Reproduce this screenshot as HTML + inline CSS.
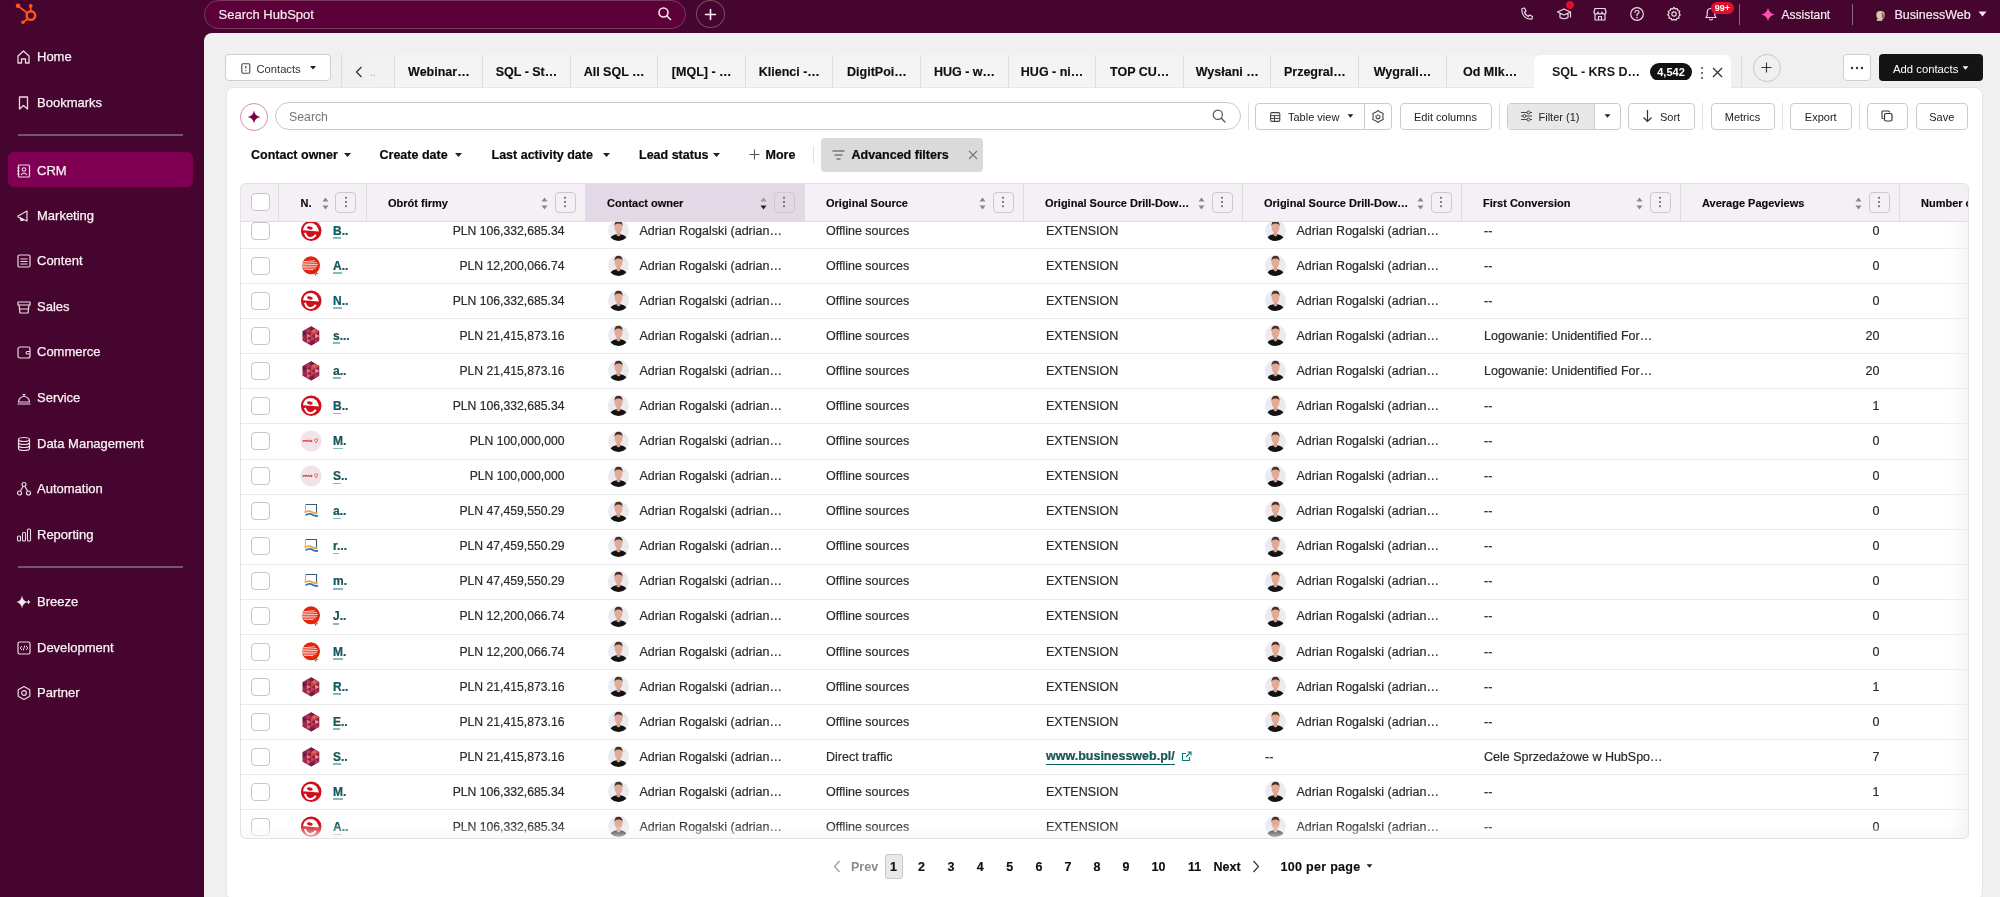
<!DOCTYPE html>
<html><head><meta charset="utf-8"><title>HubSpot CRM</title>
<style>
*{box-sizing:border-box;margin:0;padding:0}
html,body{width:2000px;height:897px;overflow:hidden}
body{background:#46052e;font-family:"Liberation Sans", sans-serif;position:relative;color:#33475b}
.a{position:absolute}
.nav{position:absolute;left:0;height:20px;width:200px;color:#faf3f6;font-size:13px;line-height:22px;-webkit-text-stroke:0.25px #faf3f6}
.nav span{position:absolute;left:37px;top:0;white-space:nowrap}
.nav svg{position:absolute;left:16px;top:3px}
.sep{position:absolute;left:18px;width:165px;height:2px;background:#725a66}
.tb{position:absolute;top:0;height:28px}
.btn{position:absolute;top:103px;height:27px;border:1px solid #cbcbcb;border-radius:4px;background:#fff;font-size:11px;color:#222;line-height:26px;text-align:center;white-space:nowrap}
.tab{position:absolute;top:55px;height:34px;width:88px;border-left:1px solid #dedede;font-weight:bold;font-size:12.5px;color:#0f0f0f;line-height:35px;text-align:center;white-space:nowrap;background:#f4f4f4;-webkit-text-stroke:0.15px #0f0f0f}
.flt{position:absolute;top:147px;font-weight:bold;font-size:12.5px;color:#0a0a0a;line-height:16px;white-space:nowrap;-webkit-text-stroke:0.2px #0a0a0a}
.th{position:absolute;top:0.5px;height:39px;font-weight:bold;font-size:11px;color:#0a0a0a;line-height:39px;white-space:nowrap;-webkit-text-stroke:0.15px #0a0a0a}
.cell{position:absolute;font-size:12.5px;color:#2b2b2b;line-height:16px;white-space:nowrap;-webkit-text-stroke:0.2px #2b2b2b}
</style></head><body><div id="root" style="position:absolute;left:0;top:0;width:2000px;height:897px;overflow:hidden;will-change:transform">

<svg class="a" style="left:0px;top:0px" width="40" height="30" viewBox="0 0 40 30">
<g stroke="#ff5716" fill="none" stroke-linecap="round">
<circle cx="30.9" cy="15.6" r="4.3" stroke-width="2.4"/>
<line x1="30.8" y1="11" x2="30.7" y2="6.5" stroke-width="1.6"/>
<line x1="27.3" y1="13" x2="18" y2="5.8" stroke-width="1.6"/>
<line x1="27.6" y1="19" x2="23" y2="22.3" stroke-width="1.7"/>
</g>
<circle cx="18" cy="5.7" r="2.3" fill="#ff5716"/>
<circle cx="30.7" cy="5.9" r="1.9" fill="#ff5716"/>
<circle cx="23" cy="22.3" r="1.8" fill="#ff5716"/>
</svg>
<div class="a" style="left:8px;top:152px;width:185px;height:35px;border-radius:6px;background:#7f0052"></div>
<div class="nav" style="top:46.0px"><svg width="16" height="16" viewBox="0 0 16 16"><path d="M2 7 L7.5 2 L13 7 V14 H9.5 V10 H5.5 V14 H2 Z" fill="none" stroke="#e9dce3" stroke-width="1.3" stroke-linejoin="round"/></svg><span>Home</span></div>
<div class="nav" style="top:92.0px"><svg width="16" height="16" viewBox="0 0 16 16"><path d="M3.5 2 H11.5 V14 L7.5 10.5 L3.5 14 Z" fill="none" stroke="#e9dce3" stroke-width="1.3" stroke-linejoin="round"/></svg><span>Bookmarks</span></div>
<div class="nav" style="top:159.5px"><svg width="16" height="16" viewBox="0 0 16 16"><rect x="2.5" y="2" width="11" height="12" rx="1" fill="none" stroke="#e9dce3" stroke-width="1.2"/><circle cx="8" cy="6.5" r="1.8" fill="none" stroke="#e9dce3" stroke-width="1.1"/><path d="M5 12 Q8 8 11 12" fill="none" stroke="#e9dce3" stroke-width="1.1"/><line x1="1" y1="5" x2="3.5" y2="5" stroke="#e9dce3" stroke-width="1"/><line x1="1" y1="8" x2="3.5" y2="8" stroke="#e9dce3" stroke-width="1"/><line x1="1" y1="11" x2="3.5" y2="11" stroke="#e9dce3" stroke-width="1"/></svg><span>CRM</span></div>
<div class="nav" style="top:204.5px"><svg width="16" height="16" viewBox="0 0 16 16"><path d="M2 8 L11 3 V13 L2 9 Z M4 9 L5 12.5 H7 L6.5 10" fill="none" stroke="#e9dce3" stroke-width="1.2" stroke-linejoin="round"/></svg><span>Marketing</span></div>
<div class="nav" style="top:250.0px"><svg width="16" height="16" viewBox="0 0 16 16"><rect x="2" y="2" width="12" height="12" rx="1.5" fill="none" stroke="#e9dce3" stroke-width="1.2"/><path d="M4.5 6 H11.5 M4.5 8.5 H11.5 M4.5 11 H11.5" stroke="#e9dce3" stroke-width="1.1"/></svg><span>Content</span></div>
<div class="nav" style="top:295.5px"><svg width="16" height="16" viewBox="0 0 16 16"><path d="M2 3 H14 V6 H2 Z M3 6 L4 14 H12 L13 6 M3.5 10 H12.5" fill="none" stroke="#e9dce3" stroke-width="1.2" stroke-linejoin="round"/></svg><span>Sales</span></div>
<div class="nav" style="top:341.0px"><svg width="16" height="16" viewBox="0 0 16 16"><rect x="2" y="3" width="12" height="11" rx="2" fill="none" stroke="#e9dce3" stroke-width="1.2"/><path d="M14 7.5 H11 A1.3 1.3 0 0 0 11 10 H14" fill="none" stroke="#e9dce3" stroke-width="1.1"/></svg><span>Commerce</span></div>
<div class="nav" style="top:387.0px"><svg width="16" height="16" viewBox="0 0 16 16"><path d="M2.5 12 A5.5 5.5 0 0 1 13.5 12 Z M1.5 14 H14.5 M8 4.5 V6.5 M6.5 4.5 H9.5" fill="none" stroke="#e9dce3" stroke-width="1.2" stroke-linejoin="round"/></svg><span>Service</span></div>
<div class="nav" style="top:432.5px"><svg width="16" height="16" viewBox="0 0 16 16"><ellipse cx="8" cy="3.5" rx="5.5" ry="2" fill="none" stroke="#e9dce3" stroke-width="1.2"/><path d="M2.5 3.5 V12.5 A5.5 2 0 0 0 13.5 12.5 V3.5 M2.5 6.5 A5.5 2 0 0 0 13.5 6.5 M2.5 9.5 A5.5 2 0 0 0 13.5 9.5" fill="none" stroke="#e9dce3" stroke-width="1.2"/></svg><span>Data Management</span></div>
<div class="nav" style="top:478.0px"><svg width="16" height="16" viewBox="0 0 16 16"><circle cx="8" cy="3.5" r="2" fill="none" stroke="#e9dce3" stroke-width="1.2"/><circle cx="3.5" cy="12" r="2" fill="none" stroke="#e9dce3" stroke-width="1.2"/><circle cx="12.5" cy="12" r="2" fill="none" stroke="#e9dce3" stroke-width="1.2"/><path d="M7 5.5 L4.5 10 M9 5.5 L11.5 10" stroke="#e9dce3" stroke-width="1.2"/></svg><span>Automation</span></div>
<div class="nav" style="top:523.5px"><svg width="16" height="16" viewBox="0 0 16 16"><rect x="1.5" y="9" width="3" height="5" rx="1" fill="none" stroke="#e9dce3" stroke-width="1.1"/><rect x="6.5" y="5.5" width="3" height="8.5" rx="1" fill="none" stroke="#e9dce3" stroke-width="1.1"/><rect x="11.5" y="2" width="3" height="12" rx="1" fill="none" stroke="#e9dce3" stroke-width="1.1"/></svg><span>Reporting</span></div>
<div class="nav" style="top:591.0px"><svg width="16" height="16" viewBox="0 0 16 16"><path d="M6 1.5 Q6.8 7 11.5 8 Q6.8 9 6 14.5 Q5.2 9 0.5 8 Q5.2 7 6 1.5 Z M12.5 5.5 Q12.8 7.6 14.8 8 Q12.8 8.4 12.5 10.5 Q12.2 8.4 10.2 8 Q12.2 7.6 12.5 5.5Z" fill="#f3e9ee"/></svg><span>Breeze</span></div>
<div class="nav" style="top:636.5px"><svg width="16" height="16" viewBox="0 0 16 16"><rect x="2" y="2" width="12" height="12" rx="1.5" fill="none" stroke="#e9dce3" stroke-width="1.2"/><path d="M6 6 L4.2 8 L6 10 M10 6 L11.8 8 L10 10 M8.8 5.5 L7.2 10.5" fill="none" stroke="#e9dce3" stroke-width="1"/></svg><span>Development</span></div>
<div class="nav" style="top:682.0px"><svg width="16" height="16" viewBox="0 0 16 16"><path d="M8 1.5 L13.8 4.8 V11.2 L8 14.5 L2.2 11.2 V4.8 Z" fill="none" stroke="#e9dce3" stroke-width="1.2" stroke-linejoin="round"/><circle cx="8" cy="8" r="2.3" fill="none" stroke="#e9dce3" stroke-width="1.2"/></svg><span>Partner</span></div>
<div class="sep" style="top:134px"></div>
<div class="sep" style="top:566px"></div>
<div class="a" style="left:204px;top:0px;width:482px;height:28.5px;border-radius:14.5px;background:#5d0039;border:1px solid #7a3a60"></div>
<div class="a" style="left:218.5px;top:7px;font-size:13px;line-height:16px;color:#f5eaf0;white-space:nowrap;-webkit-text-stroke:0.2px #f5eaf0">Search HubSpot</div>
<svg class="a" style="left:657px;top:6px" width="16" height="16" viewBox="0 0 16 16"><circle cx="6.5" cy="6.5" r="4.5" fill="none" stroke="#f3e7ed" stroke-width="1.6"/><line x1="9.8" y1="9.8" x2="13.5" y2="13.5" stroke="#f3e7ed" stroke-width="1.6" stroke-linecap="round"/></svg>
<div class="a" style="left:696px;top:0px;width:29px;height:28px;border-radius:50%;border:1px solid #7a4a66"></div>
<svg class="a" style="left:704px;top:8px" width="13" height="13" viewBox="0 0 13 13"><path d="M6.5 1.5 V11.5 M1.5 6.5 H11.5" stroke="#f7eef3" stroke-width="1.6" stroke-linecap="round"/></svg>

<svg class="a" style="left:1519px;top:6px" width="16" height="16" viewBox="0 0 16 16"><path d="M3 2.5 L5.5 2 L7 5 L5.5 6.3 Q6.5 9 9.2 10.5 L10.5 9 L13.5 10.5 L13 13 Q7.5 13.5 4.5 9.5 Q2.5 6.5 3 2.5 Z" fill="none" stroke="#eadde4" stroke-width="1.2" stroke-linecap="round" stroke-linejoin="round"/></svg>
<svg class="a" style="left:1556px;top:6px" width="16" height="16" viewBox="0 0 16 16"><path d="M1.5 6 L8 3 L14.5 6 L8 9 Z M4 7.5 V11.5 Q8 14 12 11.5 V7.5 M14.5 6 V11" fill="none" stroke="#eadde4" stroke-width="1.2" stroke-linecap="round" stroke-linejoin="round"/></svg>
<svg class="a" style="left:1592px;top:6px" width="16" height="16" viewBox="0 0 16 16"><path d="M2 6 L3 2.5 H13 L14 6 Q14 8 12 8 Q10 8 10 6 Q10 8 8 8 Q6 8 6 6 Q6 8 4 8 Q2 8 2 6 Z M3 8 V14 H13 V8 M6.5 14 V10.5 H9.5 V14" fill="none" stroke="#eadde4" stroke-width="1.2" stroke-linecap="round" stroke-linejoin="round"/></svg>
<svg class="a" style="left:1629px;top:6px" width="16" height="16" viewBox="0 0 16 16"><circle cx="8" cy="8" r="6.3" fill="none" stroke="#eadde4" stroke-width="1.2" stroke-linecap="round" stroke-linejoin="round"/><path d="M6 6.3 Q6 4.5 8 4.5 Q10 4.5 10 6.2 Q10 7.5 8 8.3 V9.5" fill="none" stroke="#eadde4" stroke-width="1.2" stroke-linecap="round" stroke-linejoin="round"/><circle cx="8" cy="11.6" r="0.8" fill="#eadde4"/></svg>
<svg class="a" style="left:1666px;top:6px" width="16" height="16" viewBox="0 0 16 16"><circle cx="8" cy="8" r="2.2" fill="none" stroke="#eadde4" stroke-width="1.2" stroke-linecap="round" stroke-linejoin="round"/><path d="M8 1.5 L9.3 3 L11.3 2.6 L11.8 4.5 L13.7 5.3 L13 7.2 L14.3 8.8 L12.8 10.1 L13 12.1 L11 12.4 L10 14.2 L8 13.4 L6 14.2 L5 12.4 L3 12.1 L3.2 10.1 L1.7 8.8 L3 7.2 L2.3 5.3 L4.2 4.5 L4.7 2.6 L6.7 3 Z" fill="none" stroke="#eadde4" stroke-width="1.2" stroke-linecap="round" stroke-linejoin="round"/></svg>
<svg class="a" style="left:1703px;top:6px" width="16" height="16" viewBox="0 0 16 16"><path d="M3 11.5 H13 L11.8 9.5 V6.5 Q11.8 2.5 8 2.5 Q4.2 2.5 4.2 6.5 V9.5 Z M6.5 13.2 Q8 14.8 9.5 13.2" fill="none" stroke="#eadde4" stroke-width="1.2" stroke-linecap="round" stroke-linejoin="round"/></svg>
<div class="a" style="left:1565px;top:0px;width:10px;height:10px;border-radius:50%;background:#e0102c;border:1px solid #43082d"></div>
<div class="a" style="left:1711px;top:2px;width:23px;height:12px;border-radius:6px;background:#e0102c;color:#fff;font-size:9px;font-weight:bold;line-height:12px;text-align:center">99+</div>
<div class="a" style="left:1738.5px;top:4px;width:1px;height:21px;background:#8a6a7c"></div>
<div class="a" style="left:1851.5px;top:4px;width:1px;height:21px;background:#8a6a7c"></div>
<svg class="a" style="left:1761px;top:7px" width="14" height="15" viewBox="0 0 14 15"><path d="M7 0.5 Q7.8 6.2 13.5 7.5 Q7.8 8.8 7 14.5 Q6.2 8.8 0.5 7.5 Q6.2 6.2 7 0.5 Z" fill="#ff4fb4"/></svg>
<div class="a" style="left:1781.5px;top:6.5px;font-size:12px;line-height:16px;color:#f5eaf0;white-space:nowrap;-webkit-text-stroke:0.2px #f5eaf0">Assistant</div>
<svg class="a" style="left:1875px;top:8px" width="11" height="13" viewBox="0 0 11 13"><ellipse cx="5.5" cy="6.8" rx="4.2" ry="5.3" fill="#e6c2b0"/><path d="M1.3 5 Q1.5 0.5 5.5 0.8 Q9.5 0.5 9.7 5 Q8 2.5 5.5 3 Q3 2.5 1.3 5 Z" fill="#2a1a14"/><path d="M6.5 4 Q9.6 5 9.4 9.5 Q8.2 11 7 10 Z" fill="#9a6a55"/><ellipse cx="4.5" cy="12" rx="3" ry="1.2" fill="#bdbdbd"/></svg>
<div class="a" style="left:1894.5px;top:6.5px;font-size:12.5px;line-height:16px;color:#f5eaf0;white-space:nowrap;-webkit-text-stroke:0.2px #f5eaf0">BusinessWeb</div>
<svg class="a" style="left:1978px;top:11px" width="9" height="6" viewBox="0 0 9 6"><path d="M0.5 0.5 H8.5 L4.5 5.5 Z" fill="#f3e7ed"/></svg>

<div class="a" style="left:204px;top:33px;width:1796px;height:864px;background:#f0f0f0;border-top-left-radius:8px"></div>
<div class="a" style="left:225px;top:54px;width:106px;height:27px;border:1px solid #cfcfcf;border-radius:4px;background:#fff"></div>
<svg class="a" style="left:240.5px;top:63px" width="10" height="11" viewBox="0 0 10 11"><rect x="0.8" y="0.8" width="8" height="9.4" rx="1.2" fill="none" stroke="#444" stroke-width="1.1"/><line x1="4.8" y1="2.8" x2="4.8" y2="5.6" stroke="#444" stroke-width="1.2"/><circle cx="4.8" cy="7.6" r="0.7" fill="#444"/></svg>
<div class="a" style="left:256.5px;top:61px;font-size:11.2px;line-height:16px;color:#333;white-space:nowrap">Contacts</div>
<svg class="a" style="left:310px;top:66px" width="6" height="4" viewBox="0 0 6 4"><path d="M0 0 H6 L3 3.5 Z" fill="#222"/></svg>
<div class="a" style="left:341px;top:54px;width:1px;height:34px;background:#dcdcdc"></div>
<div class="a" style="left:342px;top:55px;width:53px;height:34px;background:linear-gradient(90deg,#f0f0f0,#f3f3f3)"></div>
<svg class="a" style="left:354.5px;top:66px" width="8" height="12" viewBox="0 0 8 12"><path d="M6.5 1 L1.5 6 L6.5 11" fill="none" stroke="#333" stroke-width="1.3"/></svg>
<div class="a" style="left:370px;top:66px;font-size:10px;line-height:14px;color:#aaa">..</div>

<div class="tab" style="left:394.4px">Webinar…</div>
<div class="tab" style="left:482.0px">SQL - St…</div>
<div class="tab" style="left:569.6px">All SQL …</div>
<div class="tab" style="left:657.2px">[MQL] - …</div>
<div class="tab" style="left:744.8px">Klienci -…</div>
<div class="tab" style="left:832.4px">DigitPoi…</div>
<div class="tab" style="left:920.0px">HUG - w…</div>
<div class="tab" style="left:1007.6px">HUG - ni…</div>
<div class="tab" style="left:1095.2px">TOP CU…</div>
<div class="tab" style="left:1182.8px">Wysłani …</div>
<div class="tab" style="left:1270.4px">Przegral…</div>
<div class="tab" style="left:1358.0px">Wygrali…</div>
<div class="tab" style="left:1445.6px">Od MIk…</div>
<div class="a" style="left:1534px;top:55px;width:197px;height:35px;background:#fff;border-top-left-radius:6px;border-top-right-radius:6px"></div>
<div class="a" style="left:1552px;top:64px;font-weight:bold;font-size:12.5px;line-height:16px;color:#1a1a1a;white-space:nowrap">SQL - KRS D…</div>
<div class="a" style="left:1650px;top:63px;width:42px;height:18px;border-radius:9px;background:#111;color:#fff;font-weight:bold;font-size:11px;line-height:18px;text-align:center">4,542</div>
<svg class="a" style="left:1699px;top:66px" width="6" height="14" viewBox="0 0 6 14"><circle cx="3" cy="2" r="1.1" fill="#555"/><circle cx="3" cy="7" r="1.1" fill="#555"/><circle cx="3" cy="12" r="1.1" fill="#555"/></svg>
<svg class="a" style="left:1712px;top:67px" width="11" height="11" viewBox="0 0 11 11"><path d="M1 1 L10 10 M10 1 L1 10" stroke="#333" stroke-width="1.3"/></svg>
<div class="a" style="left:1741px;top:55px;width:1px;height:33px;background:#dcdcdc"></div>
<div class="a" style="left:1752.5px;top:54px;width:28px;height:28px;border-radius:50%;border:1px solid #c8c8c8"></div>
<svg class="a" style="left:1761px;top:62px" width="11" height="11" viewBox="0 0 11 11"><path d="M5.5 0.5 V10.5 M0.5 5.5 H10.5" stroke="#333" stroke-width="1.1"/></svg>
<div class="a" style="left:1843px;top:54px;width:28px;height:27px;border:1px solid #cfcfcf;border-radius:4px;background:#fff"></div>
<svg class="a" style="left:1850px;top:66px" width="14" height="4" viewBox="0 0 14 4"><circle cx="2" cy="2" r="1.2" fill="#333"/><circle cx="7" cy="2" r="1.2" fill="#333"/><circle cx="12" cy="2" r="1.2" fill="#333"/></svg>
<div class="a" style="left:1879px;top:54px;width:104px;height:27px;border-radius:4px;background:#141414"></div>
<div class="a" style="left:1893px;top:60.5px;font-size:11.3px;line-height:16px;color:#fff;white-space:nowrap">Add contacts</div>
<svg class="a" style="left:1962px;top:66px" width="7" height="5" viewBox="0 0 7 5"><path d="M0.6 0.3 H6.4 L3.5 3.8 Z" fill="#fff"/></svg>

<div class="a" style="left:225.5px;top:87.3px;width:1757px;height:812px;background:#fff;border:1px solid #e6e6e6;border-radius:7px 8px 6px 6px"></div>
<div class="a" style="left:1534px;top:80px;width:197px;height:12px;background:#fff"></div>
<div class="a" style="left:239.5px;top:102.5px;width:28px;height:28px;border-radius:50%;border:1px solid #cf8fae"></div>
<svg class="a" style="left:246.5px;top:109.5px" width="14" height="14" viewBox="0 0 13 13"><path d="M6.5 0.5 Q7.3 5.7 12.5 6.5 Q7.3 7.3 6.5 12.5 Q5.7 7.3 0.5 6.5 Q5.7 5.7 6.5 0.5 Z" fill="#7a0049"/></svg>
<div class="a" style="left:274.5px;top:102px;width:966px;height:28px;border-radius:14px;border:1px solid #c9c9c9;background:#fff"></div>
<div class="a" style="left:289px;top:109px;font-size:12.3px;line-height:16px;color:#767676;white-space:nowrap">Search</div>
<svg class="a" style="left:1212px;top:109px" width="14" height="14" viewBox="0 0 14 14"><circle cx="5.8" cy="5.8" r="4.6" fill="none" stroke="#555" stroke-width="1.2"/><line x1="9.2" y1="9.2" x2="13" y2="13" stroke="#555" stroke-width="1.3" stroke-linecap="round"/></svg>
<div class="a" style="left:1248px;top:103px;width:1px;height:27px;background:#e0e0e0"></div>

<div class="btn" style="left:1255.0px;width:137.0px;background:#fff"></div>
<div class="a" style="left:1364px;top:103px;width:1px;height:27px;background:#cbcbcb"></div>
<svg class="a" style="left:1270px;top:111.5px" width="11" height="10" viewBox="0 0 11 10"><rect x="0.6" y="0.6" width="9.2" height="8.8" rx="1.3" fill="none" stroke="#444" stroke-width="1.1"/><path d="M0.6 3.6 H9.8 M0.6 6.4 H9.8 M4.5 3.6 V9.4" stroke="#444" stroke-width="1"/></svg>
<div class="a" style="left:1288px;top:108.5px;font-size:11px;line-height:16px;color:#222;white-space:nowrap">Table view</div>
<svg class="a" style="left:1347px;top:114px" width="7" height="5" viewBox="0 0 7 5"><path d="M0.6 0.3 H6.4 L3.5 3.8 Z" fill="#222"/></svg>
<svg class="a" style="left:1371px;top:109px" width="14" height="15" viewBox="0 0 14 15"><path d="M7.00 1.50 L9.40 3.34 L12.20 4.50 L11.80 7.50 L12.20 10.50 L9.40 11.66 L7.00 13.50 L4.60 11.66 L1.80 10.50 L2.20 7.50 L1.80 4.50 L4.60 3.34 Z" fill="none" stroke="#444" stroke-width="1.1" stroke-linejoin="round"/><path d="M5.6 6.4 A2 2 0 1 0 8.4 6.4" fill="none" stroke="#444" stroke-width="1.1"/><line x1="7" y1="5.2" x2="7" y2="7.3" stroke="#444" stroke-width="1.1"/></svg>

<div class="btn" style="left:1399.5px;width:92.0px;background:#fff">Edit columns</div>
<div class="a" style="left:1498.5px;top:103px;width:1px;height:27px;background:#e0e0e0"></div>
<div class="btn" style="left:1506.5px;width:114.0px;background:#fff"></div>
<div class="a" style="left:1507.5px;top:104px;width:86px;height:25px;background:#e8e8e8;border-radius:3px 0 0 3px"></div>
<div class="a" style="left:1593.5px;top:103px;width:1px;height:27px;background:#cbcbcb"></div>
<svg class="a" style="left:1520px;top:110px" width="13" height="12" viewBox="0 0 13 12"><path d="M1 2.5 H12 M1 6 H12 M1 9.5 H12" stroke="#444" stroke-width="1.1"/><circle cx="8.5" cy="2.5" r="1.5" fill="#e8e8e8" stroke="#444" stroke-width="1"/><circle cx="4.5" cy="6" r="1.5" fill="#e8e8e8" stroke="#444" stroke-width="1"/><circle cx="8.5" cy="9.5" r="1.5" fill="#e8e8e8" stroke="#444" stroke-width="1"/></svg>
<div class="a" style="left:1538.5px;top:108.5px;font-size:11px;line-height:16px;color:#222;white-space:nowrap">Filter (1)</div>
<svg class="a" style="left:1604px;top:114px" width="7" height="5" viewBox="0 0 7 5"><path d="M0.6 0.3 H6.4 L3.5 3.8 Z" fill="#222"/></svg>

<div class="btn" style="left:1628.0px;width:67.0px;background:#fff"></div>
<svg class="a" style="left:1642px;top:109px" width="11" height="14" viewBox="0 0 11 14"><path d="M5.5 1 V12.5 M1.5 8.5 L5.5 12.5 L9.5 8.5" fill="none" stroke="#333" stroke-width="1.2"/></svg>
<div class="a" style="left:1660px;top:108.5px;font-size:11px;line-height:16px;color:#222;white-space:nowrap">Sort</div>
<div class="a" style="left:1702px;top:103px;width:1px;height:27px;background:#e0e0e0"></div>

<div class="btn" style="left:1710.5px;width:64.0px;background:#fff">Metrics</div>
<div class="a" style="left:1782px;top:103px;width:1px;height:27px;background:#e0e0e0"></div>
<div class="btn" style="left:1790.0px;width:61.5px;background:#fff">Export</div>
<div class="a" style="left:1859px;top:103px;width:1px;height:27px;background:#e0e0e0"></div>
<div class="btn" style="left:1866.5px;width:41.5px;background:#fff"></div>
<svg class="a" style="left:1881px;top:110px" width="12" height="12" viewBox="0 0 12 12"><rect x="3.5" y="3.5" width="7.5" height="7.5" rx="1.5" fill="none" stroke="#333" stroke-width="1.2"/><path d="M2.5 8.5 H2 Q1 8.5 1 7.5 V2 Q1 1 2 1 H7.5 Q8.5 1 8.5 2 V2.5" fill="none" stroke="#333" stroke-width="1.1"/></svg>
<div class="btn" style="left:1915.5px;width:52.5px;background:#fff">Save</div>
<div class="flt" style="left:251.0px">Contact owner</div>
<svg width="7" height="5" viewBox="0 0 7 5" style="position:absolute;left:344.0px;top:153px"><path d="M0 0 H7 L3.5 4 Z" fill="#222"/></svg>
<div class="flt" style="left:379.5px">Create date</div>
<svg width="7" height="5" viewBox="0 0 7 5" style="position:absolute;left:455.0px;top:153px"><path d="M0 0 H7 L3.5 4 Z" fill="#222"/></svg>
<div class="flt" style="left:491.5px">Last activity date</div>
<svg width="7" height="5" viewBox="0 0 7 5" style="position:absolute;left:602.5px;top:153px"><path d="M0 0 H7 L3.5 4 Z" fill="#222"/></svg>
<div class="flt" style="left:639.0px">Lead status</div>
<svg width="7" height="5" viewBox="0 0 7 5" style="position:absolute;left:713.0px;top:153px"><path d="M0 0 H7 L3.5 4 Z" fill="#222"/></svg>
<svg class="a" style="left:749px;top:149px" width="11" height="11" viewBox="0 0 11 11"><path d="M5.5 0.5 V10.5 M0.5 5.5 H10.5" stroke="#555" stroke-width="1.1"/></svg>
<div class="flt" style="left:765.5px">More</div>
<div class="a" style="left:813px;top:146px;width:1px;height:18px;background:#e0e0e0"></div>
<div class="a" style="left:821px;top:138px;width:162px;height:34px;border-radius:4px;background:#dadada"></div>
<svg class="a" style="left:832px;top:150px" width="13" height="11" viewBox="0 0 13 11"><path d="M0.5 1 H12.5 M2.5 5 H10.5 M4.5 9 H8.5" stroke="#444" stroke-width="1.2"/></svg>
<div class="flt" style="left:851.5px">Advanced filters</div>
<svg class="a" style="left:968px;top:150px" width="10" height="10" viewBox="0 0 10 10"><path d="M1 1 L9 9 M9 1 L1 9" stroke="#777" stroke-width="1.1"/></svg>

<div class="a" style="left:240px;top:183px;width:1728.5px;height:656px;border-radius:6px;overflow:hidden;background:#fff">
<div class="a" style="left:0;top:65.0px;width:1730px;height:1px;background:#ebebeb"></div>
<div class="a" style="left:11.0px;top:38.5px;width:18.5px;height:18px;border:1px solid #c6c6c6;border-radius:4px;background:#fff"></div>
<div class="a" style="left:60.0px;top:36.5px;width:22px;height:22px"><svg width="22" height="22" viewBox="0 0 22 22"><circle cx="11.2" cy="10.8" r="10.3" fill="#d10f1b"/><path d="M3 10.3 Q3.6 3.1 10.6 2.9 Q17.3 3.1 19 11.6 Z" fill="#fff"/><ellipse cx="9.9" cy="8" rx="2.9" ry="1.6" fill="#d10f1b" transform="rotate(12 9.9 8)"/><path d="M4.9 12.9 Q6.6 18.2 10.5 18.1 Q14 17.9 15.8 14.7" fill="none" stroke="#fff" stroke-width="1.9"/></svg></div>
<div class="cell" style="left:93.0px;top:39.5px;color:#0b5f63;font-weight:bold;font-size:12px">B..</div>
<div class="a" style="left:92.5px;top:54.1px;width:8px;height:1.7px;background:#8ab8b9"></div>
<div class="cell" style="right:1404.0px;top:39.5px;font-size:12.2px">PLN 106,332,685.34</div>
<div class="a" style="left:367.5px;top:37.0px;width:21px;height:21px"><svg width="21" height="21" viewBox="0 0 21 21"><defs><clipPath id="avc"><circle cx="10.5" cy="10.5" r="10.5"/></clipPath></defs><circle cx="10.5" cy="10.5" r="10.5" fill="#ebeaf0"/><g clip-path="url(#avc)"><path d="M1 21 Q2.5 15 8.5 14.3 H12.5 Q18.5 15 20 21 Z" fill="#121212"/><path d="M8.7 11.5 V15.5 L10.5 16.5 L12.3 15.5 V11.5 Z" fill="#d9a08a"/><ellipse cx="10.5" cy="7.6" rx="3.9" ry="5" fill="#e2ab96"/><path d="M6.4 6.5 Q6.2 0.6 10.5 0.7 Q14.8 0.6 14.6 6.5 Q14 3.2 10.5 3.4 Q7 3.2 6.4 6.5 Z" fill="#4a2f22"/></g></svg></div>
<div class="cell" style="left:399.5px;top:39.5px">Adrian Rogalski (adrian…</div>
<div class="cell" style="left:586.0px;top:39.5px">Offline sources</div>
<div class="cell" style="left:806.0px;top:39.5px">EXTENSION</div>
<div class="a" style="left:1024.5px;top:37.0px;width:21px;height:21px"><svg width="21" height="21" viewBox="0 0 21 21"><defs><clipPath id="avc"><circle cx="10.5" cy="10.5" r="10.5"/></clipPath></defs><circle cx="10.5" cy="10.5" r="10.5" fill="#ebeaf0"/><g clip-path="url(#avc)"><path d="M1 21 Q2.5 15 8.5 14.3 H12.5 Q18.5 15 20 21 Z" fill="#121212"/><path d="M8.7 11.5 V15.5 L10.5 16.5 L12.3 15.5 V11.5 Z" fill="#d9a08a"/><ellipse cx="10.5" cy="7.6" rx="3.9" ry="5" fill="#e2ab96"/><path d="M6.4 6.5 Q6.2 0.6 10.5 0.7 Q14.8 0.6 14.6 6.5 Q14 3.2 10.5 3.4 Q7 3.2 6.4 6.5 Z" fill="#4a2f22"/></g></svg></div>
<div class="cell" style="left:1056.5px;top:39.5px">Adrian Rogalski (adrian…</div>
<div class="cell" style="left:1244.0px;top:39.5px">--</div>
<div class="cell" style="right:89.0px;top:39.5px">0</div>
<div class="a" style="left:0;top:100.1px;width:1730px;height:1px;background:#ebebeb"></div>
<div class="a" style="left:11.0px;top:73.6px;width:18.5px;height:18px;border:1px solid #c6c6c6;border-radius:4px;background:#fff"></div>
<div class="a" style="left:60.0px;top:71.6px;width:22px;height:22px"><svg width="22" height="22" viewBox="0 0 22 22"><circle cx="11" cy="10.3" r="9" fill="#e3250e"/><g stroke="#fff" stroke-width="0.75" fill="none" stroke-linecap="round"><path d="M3 6.8 L14.5 5.8"/><path d="M2.5 8.3 L16.5 7.6"/><path d="M2.2 9.8 L17.5 9.4"/><path d="M2.4 11.3 L16.8 11.2"/><path d="M3 12.8 L15.5 13"/><path d="M4.2 14.3 L13 14.6"/></g><path d="M14 17.5 L16.2 20.5 M15.5 17 L17.5 19" stroke="#e3250e" stroke-width="1.1"/></svg></div>
<div class="cell" style="left:93.0px;top:74.6px;color:#0b5f63;font-weight:bold;font-size:12px">A..</div>
<div class="a" style="left:92.5px;top:89.2px;width:9px;height:1.7px;background:#8ab8b9"></div>
<div class="cell" style="right:1404.0px;top:74.6px;font-size:12.2px">PLN 12,200,066.74</div>
<div class="a" style="left:367.5px;top:72.1px;width:21px;height:21px"><svg width="21" height="21" viewBox="0 0 21 21"><defs><clipPath id="avc"><circle cx="10.5" cy="10.5" r="10.5"/></clipPath></defs><circle cx="10.5" cy="10.5" r="10.5" fill="#ebeaf0"/><g clip-path="url(#avc)"><path d="M1 21 Q2.5 15 8.5 14.3 H12.5 Q18.5 15 20 21 Z" fill="#121212"/><path d="M8.7 11.5 V15.5 L10.5 16.5 L12.3 15.5 V11.5 Z" fill="#d9a08a"/><ellipse cx="10.5" cy="7.6" rx="3.9" ry="5" fill="#e2ab96"/><path d="M6.4 6.5 Q6.2 0.6 10.5 0.7 Q14.8 0.6 14.6 6.5 Q14 3.2 10.5 3.4 Q7 3.2 6.4 6.5 Z" fill="#4a2f22"/></g></svg></div>
<div class="cell" style="left:399.5px;top:74.6px">Adrian Rogalski (adrian…</div>
<div class="cell" style="left:586.0px;top:74.6px">Offline sources</div>
<div class="cell" style="left:806.0px;top:74.6px">EXTENSION</div>
<div class="a" style="left:1024.5px;top:72.1px;width:21px;height:21px"><svg width="21" height="21" viewBox="0 0 21 21"><defs><clipPath id="avc"><circle cx="10.5" cy="10.5" r="10.5"/></clipPath></defs><circle cx="10.5" cy="10.5" r="10.5" fill="#ebeaf0"/><g clip-path="url(#avc)"><path d="M1 21 Q2.5 15 8.5 14.3 H12.5 Q18.5 15 20 21 Z" fill="#121212"/><path d="M8.7 11.5 V15.5 L10.5 16.5 L12.3 15.5 V11.5 Z" fill="#d9a08a"/><ellipse cx="10.5" cy="7.6" rx="3.9" ry="5" fill="#e2ab96"/><path d="M6.4 6.5 Q6.2 0.6 10.5 0.7 Q14.8 0.6 14.6 6.5 Q14 3.2 10.5 3.4 Q7 3.2 6.4 6.5 Z" fill="#4a2f22"/></g></svg></div>
<div class="cell" style="left:1056.5px;top:74.6px">Adrian Rogalski (adrian…</div>
<div class="cell" style="left:1244.0px;top:74.6px">--</div>
<div class="cell" style="right:89.0px;top:74.6px">0</div>
<div class="a" style="left:0;top:135.2px;width:1730px;height:1px;background:#ebebeb"></div>
<div class="a" style="left:11.0px;top:108.7px;width:18.5px;height:18px;border:1px solid #c6c6c6;border-radius:4px;background:#fff"></div>
<div class="a" style="left:60.0px;top:106.7px;width:22px;height:22px"><svg width="22" height="22" viewBox="0 0 22 22"><circle cx="11.2" cy="10.8" r="10.3" fill="#d10f1b"/><path d="M3 10.3 Q3.6 3.1 10.6 2.9 Q17.3 3.1 19 11.6 Z" fill="#fff"/><ellipse cx="9.9" cy="8" rx="2.9" ry="1.6" fill="#d10f1b" transform="rotate(12 9.9 8)"/><path d="M4.9 12.9 Q6.6 18.2 10.5 18.1 Q14 17.9 15.8 14.7" fill="none" stroke="#fff" stroke-width="1.9"/></svg></div>
<div class="cell" style="left:93.0px;top:109.7px;color:#0b5f63;font-weight:bold;font-size:12px">N..</div>
<div class="a" style="left:92.5px;top:124.3px;width:9px;height:1.7px;background:#8ab8b9"></div>
<div class="cell" style="right:1404.0px;top:109.7px;font-size:12.2px">PLN 106,332,685.34</div>
<div class="a" style="left:367.5px;top:107.2px;width:21px;height:21px"><svg width="21" height="21" viewBox="0 0 21 21"><defs><clipPath id="avc"><circle cx="10.5" cy="10.5" r="10.5"/></clipPath></defs><circle cx="10.5" cy="10.5" r="10.5" fill="#ebeaf0"/><g clip-path="url(#avc)"><path d="M1 21 Q2.5 15 8.5 14.3 H12.5 Q18.5 15 20 21 Z" fill="#121212"/><path d="M8.7 11.5 V15.5 L10.5 16.5 L12.3 15.5 V11.5 Z" fill="#d9a08a"/><ellipse cx="10.5" cy="7.6" rx="3.9" ry="5" fill="#e2ab96"/><path d="M6.4 6.5 Q6.2 0.6 10.5 0.7 Q14.8 0.6 14.6 6.5 Q14 3.2 10.5 3.4 Q7 3.2 6.4 6.5 Z" fill="#4a2f22"/></g></svg></div>
<div class="cell" style="left:399.5px;top:109.7px">Adrian Rogalski (adrian…</div>
<div class="cell" style="left:586.0px;top:109.7px">Offline sources</div>
<div class="cell" style="left:806.0px;top:109.7px">EXTENSION</div>
<div class="a" style="left:1024.5px;top:107.2px;width:21px;height:21px"><svg width="21" height="21" viewBox="0 0 21 21"><defs><clipPath id="avc"><circle cx="10.5" cy="10.5" r="10.5"/></clipPath></defs><circle cx="10.5" cy="10.5" r="10.5" fill="#ebeaf0"/><g clip-path="url(#avc)"><path d="M1 21 Q2.5 15 8.5 14.3 H12.5 Q18.5 15 20 21 Z" fill="#121212"/><path d="M8.7 11.5 V15.5 L10.5 16.5 L12.3 15.5 V11.5 Z" fill="#d9a08a"/><ellipse cx="10.5" cy="7.6" rx="3.9" ry="5" fill="#e2ab96"/><path d="M6.4 6.5 Q6.2 0.6 10.5 0.7 Q14.8 0.6 14.6 6.5 Q14 3.2 10.5 3.4 Q7 3.2 6.4 6.5 Z" fill="#4a2f22"/></g></svg></div>
<div class="cell" style="left:1056.5px;top:109.7px">Adrian Rogalski (adrian…</div>
<div class="cell" style="left:1244.0px;top:109.7px">--</div>
<div class="cell" style="right:89.0px;top:109.7px">0</div>
<div class="a" style="left:0;top:170.2px;width:1730px;height:1px;background:#ebebeb"></div>
<div class="a" style="left:11.0px;top:143.7px;width:18.5px;height:18px;border:1px solid #c6c6c6;border-radius:4px;background:#fff"></div>
<div class="a" style="left:60.0px;top:141.7px;width:22px;height:22px"><svg width="22" height="22" viewBox="0 0 22 22"><path d="M11 1.2 L19.3 6 V15.8 L11 20.6 L2.7 15.8 V6 Z" fill="#8c2450"/><path d="M11 1.2 L15.2 3.6 L11 6 Z" fill="#6e1c48"/><path d="M15.2 3.6 L19.3 6 L15.2 8.4 Z" fill="#d9504a"/><path d="M11 6 L15.2 3.6 L15.2 8.4 Z" fill="#e56a56"/><path d="M6.8 3.6 L11 6 L6.8 8.4 Z" fill="#c43a4a"/><path d="M2.7 6 L6.8 8.4 L2.7 10.9 Z" fill="#5e1a45"/><path d="M6.8 8.4 L11 10.9 L6.8 13.3 Z" fill="#f07a5a"/><path d="M11 6 L15.2 8.4 L11 10.9 Z" fill="#e0443e"/><path d="M15.2 8.4 L19.3 10.9 L15.2 13.3 Z" fill="#f29a86"/><path d="M11 10.9 L15.2 13.3 L11 15.8 Z" fill="#d63e44"/><path d="M6.8 13.3 L11 15.8 L6.8 18.2 Z" fill="#e8604e"/><path d="M2.7 10.9 L6.8 13.3 L2.7 15.8 Z" fill="#a82c52"/><path d="M15.2 13.3 L19.3 15.8 L15.2 18.2 Z" fill="#b8344e"/><path d="M11 15.8 L15.2 18.2 L11 20.6 Z" fill="#6a1c48"/></svg></div>
<div class="cell" style="left:93.0px;top:144.7px;color:#0b5f63;font-weight:bold;font-size:12px">s...</div>
<div class="a" style="left:92.5px;top:159.3px;width:7px;height:1.7px;background:#8ab8b9"></div>
<div class="cell" style="right:1404.0px;top:144.7px;font-size:12.2px">PLN 21,415,873.16</div>
<div class="a" style="left:367.5px;top:142.2px;width:21px;height:21px"><svg width="21" height="21" viewBox="0 0 21 21"><defs><clipPath id="avc"><circle cx="10.5" cy="10.5" r="10.5"/></clipPath></defs><circle cx="10.5" cy="10.5" r="10.5" fill="#ebeaf0"/><g clip-path="url(#avc)"><path d="M1 21 Q2.5 15 8.5 14.3 H12.5 Q18.5 15 20 21 Z" fill="#121212"/><path d="M8.7 11.5 V15.5 L10.5 16.5 L12.3 15.5 V11.5 Z" fill="#d9a08a"/><ellipse cx="10.5" cy="7.6" rx="3.9" ry="5" fill="#e2ab96"/><path d="M6.4 6.5 Q6.2 0.6 10.5 0.7 Q14.8 0.6 14.6 6.5 Q14 3.2 10.5 3.4 Q7 3.2 6.4 6.5 Z" fill="#4a2f22"/></g></svg></div>
<div class="cell" style="left:399.5px;top:144.7px">Adrian Rogalski (adrian…</div>
<div class="cell" style="left:586.0px;top:144.7px">Offline sources</div>
<div class="cell" style="left:806.0px;top:144.7px">EXTENSION</div>
<div class="a" style="left:1024.5px;top:142.2px;width:21px;height:21px"><svg width="21" height="21" viewBox="0 0 21 21"><defs><clipPath id="avc"><circle cx="10.5" cy="10.5" r="10.5"/></clipPath></defs><circle cx="10.5" cy="10.5" r="10.5" fill="#ebeaf0"/><g clip-path="url(#avc)"><path d="M1 21 Q2.5 15 8.5 14.3 H12.5 Q18.5 15 20 21 Z" fill="#121212"/><path d="M8.7 11.5 V15.5 L10.5 16.5 L12.3 15.5 V11.5 Z" fill="#d9a08a"/><ellipse cx="10.5" cy="7.6" rx="3.9" ry="5" fill="#e2ab96"/><path d="M6.4 6.5 Q6.2 0.6 10.5 0.7 Q14.8 0.6 14.6 6.5 Q14 3.2 10.5 3.4 Q7 3.2 6.4 6.5 Z" fill="#4a2f22"/></g></svg></div>
<div class="cell" style="left:1056.5px;top:144.7px">Adrian Rogalski (adrian…</div>
<div class="cell" style="left:1244.0px;top:144.7px">Logowanie: Unidentified For…</div>
<div class="cell" style="right:89.0px;top:144.7px">20</div>
<div class="a" style="left:0;top:205.3px;width:1730px;height:1px;background:#ebebeb"></div>
<div class="a" style="left:11.0px;top:178.8px;width:18.5px;height:18px;border:1px solid #c6c6c6;border-radius:4px;background:#fff"></div>
<div class="a" style="left:60.0px;top:176.8px;width:22px;height:22px"><svg width="22" height="22" viewBox="0 0 22 22"><path d="M11 1.2 L19.3 6 V15.8 L11 20.6 L2.7 15.8 V6 Z" fill="#8c2450"/><path d="M11 1.2 L15.2 3.6 L11 6 Z" fill="#6e1c48"/><path d="M15.2 3.6 L19.3 6 L15.2 8.4 Z" fill="#d9504a"/><path d="M11 6 L15.2 3.6 L15.2 8.4 Z" fill="#e56a56"/><path d="M6.8 3.6 L11 6 L6.8 8.4 Z" fill="#c43a4a"/><path d="M2.7 6 L6.8 8.4 L2.7 10.9 Z" fill="#5e1a45"/><path d="M6.8 8.4 L11 10.9 L6.8 13.3 Z" fill="#f07a5a"/><path d="M11 6 L15.2 8.4 L11 10.9 Z" fill="#e0443e"/><path d="M15.2 8.4 L19.3 10.9 L15.2 13.3 Z" fill="#f29a86"/><path d="M11 10.9 L15.2 13.3 L11 15.8 Z" fill="#d63e44"/><path d="M6.8 13.3 L11 15.8 L6.8 18.2 Z" fill="#e8604e"/><path d="M2.7 10.9 L6.8 13.3 L2.7 15.8 Z" fill="#a82c52"/><path d="M15.2 13.3 L19.3 15.8 L15.2 18.2 Z" fill="#b8344e"/><path d="M11 15.8 L15.2 18.2 L11 20.6 Z" fill="#6a1c48"/></svg></div>
<div class="cell" style="left:93.0px;top:179.8px;color:#0b5f63;font-weight:bold;font-size:12px">a..</div>
<div class="a" style="left:92.5px;top:194.4px;width:8px;height:1.7px;background:#8ab8b9"></div>
<div class="cell" style="right:1404.0px;top:179.8px;font-size:12.2px">PLN 21,415,873.16</div>
<div class="a" style="left:367.5px;top:177.3px;width:21px;height:21px"><svg width="21" height="21" viewBox="0 0 21 21"><defs><clipPath id="avc"><circle cx="10.5" cy="10.5" r="10.5"/></clipPath></defs><circle cx="10.5" cy="10.5" r="10.5" fill="#ebeaf0"/><g clip-path="url(#avc)"><path d="M1 21 Q2.5 15 8.5 14.3 H12.5 Q18.5 15 20 21 Z" fill="#121212"/><path d="M8.7 11.5 V15.5 L10.5 16.5 L12.3 15.5 V11.5 Z" fill="#d9a08a"/><ellipse cx="10.5" cy="7.6" rx="3.9" ry="5" fill="#e2ab96"/><path d="M6.4 6.5 Q6.2 0.6 10.5 0.7 Q14.8 0.6 14.6 6.5 Q14 3.2 10.5 3.4 Q7 3.2 6.4 6.5 Z" fill="#4a2f22"/></g></svg></div>
<div class="cell" style="left:399.5px;top:179.8px">Adrian Rogalski (adrian…</div>
<div class="cell" style="left:586.0px;top:179.8px">Offline sources</div>
<div class="cell" style="left:806.0px;top:179.8px">EXTENSION</div>
<div class="a" style="left:1024.5px;top:177.3px;width:21px;height:21px"><svg width="21" height="21" viewBox="0 0 21 21"><defs><clipPath id="avc"><circle cx="10.5" cy="10.5" r="10.5"/></clipPath></defs><circle cx="10.5" cy="10.5" r="10.5" fill="#ebeaf0"/><g clip-path="url(#avc)"><path d="M1 21 Q2.5 15 8.5 14.3 H12.5 Q18.5 15 20 21 Z" fill="#121212"/><path d="M8.7 11.5 V15.5 L10.5 16.5 L12.3 15.5 V11.5 Z" fill="#d9a08a"/><ellipse cx="10.5" cy="7.6" rx="3.9" ry="5" fill="#e2ab96"/><path d="M6.4 6.5 Q6.2 0.6 10.5 0.7 Q14.8 0.6 14.6 6.5 Q14 3.2 10.5 3.4 Q7 3.2 6.4 6.5 Z" fill="#4a2f22"/></g></svg></div>
<div class="cell" style="left:1056.5px;top:179.8px">Adrian Rogalski (adrian…</div>
<div class="cell" style="left:1244.0px;top:179.8px">Logowanie: Unidentified For…</div>
<div class="cell" style="right:89.0px;top:179.8px">20</div>
<div class="a" style="left:0;top:240.4px;width:1730px;height:1px;background:#ebebeb"></div>
<div class="a" style="left:11.0px;top:213.9px;width:18.5px;height:18px;border:1px solid #c6c6c6;border-radius:4px;background:#fff"></div>
<div class="a" style="left:60.0px;top:211.9px;width:22px;height:22px"><svg width="22" height="22" viewBox="0 0 22 22"><circle cx="11.2" cy="10.8" r="10.3" fill="#d10f1b"/><path d="M3 10.3 Q3.6 3.1 10.6 2.9 Q17.3 3.1 19 11.6 Z" fill="#fff"/><ellipse cx="9.9" cy="8" rx="2.9" ry="1.6" fill="#d10f1b" transform="rotate(12 9.9 8)"/><path d="M4.9 12.9 Q6.6 18.2 10.5 18.1 Q14 17.9 15.8 14.7" fill="none" stroke="#fff" stroke-width="1.9"/></svg></div>
<div class="cell" style="left:93.0px;top:214.9px;color:#0b5f63;font-weight:bold;font-size:12px">B..</div>
<div class="a" style="left:92.5px;top:229.5px;width:8px;height:1.7px;background:#8ab8b9"></div>
<div class="cell" style="right:1404.0px;top:214.9px;font-size:12.2px">PLN 106,332,685.34</div>
<div class="a" style="left:367.5px;top:212.4px;width:21px;height:21px"><svg width="21" height="21" viewBox="0 0 21 21"><defs><clipPath id="avc"><circle cx="10.5" cy="10.5" r="10.5"/></clipPath></defs><circle cx="10.5" cy="10.5" r="10.5" fill="#ebeaf0"/><g clip-path="url(#avc)"><path d="M1 21 Q2.5 15 8.5 14.3 H12.5 Q18.5 15 20 21 Z" fill="#121212"/><path d="M8.7 11.5 V15.5 L10.5 16.5 L12.3 15.5 V11.5 Z" fill="#d9a08a"/><ellipse cx="10.5" cy="7.6" rx="3.9" ry="5" fill="#e2ab96"/><path d="M6.4 6.5 Q6.2 0.6 10.5 0.7 Q14.8 0.6 14.6 6.5 Q14 3.2 10.5 3.4 Q7 3.2 6.4 6.5 Z" fill="#4a2f22"/></g></svg></div>
<div class="cell" style="left:399.5px;top:214.9px">Adrian Rogalski (adrian…</div>
<div class="cell" style="left:586.0px;top:214.9px">Offline sources</div>
<div class="cell" style="left:806.0px;top:214.9px">EXTENSION</div>
<div class="a" style="left:1024.5px;top:212.4px;width:21px;height:21px"><svg width="21" height="21" viewBox="0 0 21 21"><defs><clipPath id="avc"><circle cx="10.5" cy="10.5" r="10.5"/></clipPath></defs><circle cx="10.5" cy="10.5" r="10.5" fill="#ebeaf0"/><g clip-path="url(#avc)"><path d="M1 21 Q2.5 15 8.5 14.3 H12.5 Q18.5 15 20 21 Z" fill="#121212"/><path d="M8.7 11.5 V15.5 L10.5 16.5 L12.3 15.5 V11.5 Z" fill="#d9a08a"/><ellipse cx="10.5" cy="7.6" rx="3.9" ry="5" fill="#e2ab96"/><path d="M6.4 6.5 Q6.2 0.6 10.5 0.7 Q14.8 0.6 14.6 6.5 Q14 3.2 10.5 3.4 Q7 3.2 6.4 6.5 Z" fill="#4a2f22"/></g></svg></div>
<div class="cell" style="left:1056.5px;top:214.9px">Adrian Rogalski (adrian…</div>
<div class="cell" style="left:1244.0px;top:214.9px">--</div>
<div class="cell" style="right:89.0px;top:214.9px">1</div>
<div class="a" style="left:0;top:275.5px;width:1730px;height:1px;background:#ebebeb"></div>
<div class="a" style="left:11.0px;top:249.0px;width:18.5px;height:18px;border:1px solid #c6c6c6;border-radius:4px;background:#fff"></div>
<div class="a" style="left:60.0px;top:247.0px;width:22px;height:22px"><svg width="22" height="22" viewBox="0 0 22 22"><circle cx="11" cy="11" r="10.6" fill="#f1e4e9"/><path d="M2.8 10 L3.6 11.8 L4.4 10 M5.2 10 V11.8 M6 11.8 V10.2 Q7.2 9.6 7.4 11.8 M8.2 11.8 V10.2 Q9.4 9.6 9.6 11.8 M11.8 10.4 Q10.4 9.8 10.4 11 Q10.4 12 11.8 11.6 V10.2" fill="none" stroke="#d62a3c" stroke-width="0.9"/><path d="M14.5 9.5 Q16 8.2 17.8 9.3 Q17.4 11.6 16.2 13 Q15 11.5 14.5 9.5 Z" fill="none" stroke="#e35560" stroke-width="0.8"/></svg></div>
<div class="cell" style="left:93.0px;top:250.0px;color:#0b5f63;font-weight:bold;font-size:12px">M.</div>
<div class="a" style="left:92.5px;top:264.6px;width:10px;height:1.7px;background:#8ab8b9"></div>
<div class="cell" style="right:1404.0px;top:250.0px;font-size:12.2px">PLN 100,000,000</div>
<div class="a" style="left:367.5px;top:247.5px;width:21px;height:21px"><svg width="21" height="21" viewBox="0 0 21 21"><defs><clipPath id="avc"><circle cx="10.5" cy="10.5" r="10.5"/></clipPath></defs><circle cx="10.5" cy="10.5" r="10.5" fill="#ebeaf0"/><g clip-path="url(#avc)"><path d="M1 21 Q2.5 15 8.5 14.3 H12.5 Q18.5 15 20 21 Z" fill="#121212"/><path d="M8.7 11.5 V15.5 L10.5 16.5 L12.3 15.5 V11.5 Z" fill="#d9a08a"/><ellipse cx="10.5" cy="7.6" rx="3.9" ry="5" fill="#e2ab96"/><path d="M6.4 6.5 Q6.2 0.6 10.5 0.7 Q14.8 0.6 14.6 6.5 Q14 3.2 10.5 3.4 Q7 3.2 6.4 6.5 Z" fill="#4a2f22"/></g></svg></div>
<div class="cell" style="left:399.5px;top:250.0px">Adrian Rogalski (adrian…</div>
<div class="cell" style="left:586.0px;top:250.0px">Offline sources</div>
<div class="cell" style="left:806.0px;top:250.0px">EXTENSION</div>
<div class="a" style="left:1024.5px;top:247.5px;width:21px;height:21px"><svg width="21" height="21" viewBox="0 0 21 21"><defs><clipPath id="avc"><circle cx="10.5" cy="10.5" r="10.5"/></clipPath></defs><circle cx="10.5" cy="10.5" r="10.5" fill="#ebeaf0"/><g clip-path="url(#avc)"><path d="M1 21 Q2.5 15 8.5 14.3 H12.5 Q18.5 15 20 21 Z" fill="#121212"/><path d="M8.7 11.5 V15.5 L10.5 16.5 L12.3 15.5 V11.5 Z" fill="#d9a08a"/><ellipse cx="10.5" cy="7.6" rx="3.9" ry="5" fill="#e2ab96"/><path d="M6.4 6.5 Q6.2 0.6 10.5 0.7 Q14.8 0.6 14.6 6.5 Q14 3.2 10.5 3.4 Q7 3.2 6.4 6.5 Z" fill="#4a2f22"/></g></svg></div>
<div class="cell" style="left:1056.5px;top:250.0px">Adrian Rogalski (adrian…</div>
<div class="cell" style="left:1244.0px;top:250.0px">--</div>
<div class="cell" style="right:89.0px;top:250.0px">0</div>
<div class="a" style="left:0;top:310.6px;width:1730px;height:1px;background:#ebebeb"></div>
<div class="a" style="left:11.0px;top:284.1px;width:18.5px;height:18px;border:1px solid #c6c6c6;border-radius:4px;background:#fff"></div>
<div class="a" style="left:60.0px;top:282.1px;width:22px;height:22px"><svg width="22" height="22" viewBox="0 0 22 22"><circle cx="11" cy="11" r="10.6" fill="#f1e4e9"/><path d="M2.8 10 L3.6 11.8 L4.4 10 M5.2 10 V11.8 M6 11.8 V10.2 Q7.2 9.6 7.4 11.8 M8.2 11.8 V10.2 Q9.4 9.6 9.6 11.8 M11.8 10.4 Q10.4 9.8 10.4 11 Q10.4 12 11.8 11.6 V10.2" fill="none" stroke="#d62a3c" stroke-width="0.9"/><path d="M14.5 9.5 Q16 8.2 17.8 9.3 Q17.4 11.6 16.2 13 Q15 11.5 14.5 9.5 Z" fill="none" stroke="#e35560" stroke-width="0.8"/></svg></div>
<div class="cell" style="left:93.0px;top:285.1px;color:#0b5f63;font-weight:bold;font-size:12px">S..</div>
<div class="a" style="left:92.5px;top:299.7px;width:8px;height:1.7px;background:#8ab8b9"></div>
<div class="cell" style="right:1404.0px;top:285.1px;font-size:12.2px">PLN 100,000,000</div>
<div class="a" style="left:367.5px;top:282.6px;width:21px;height:21px"><svg width="21" height="21" viewBox="0 0 21 21"><defs><clipPath id="avc"><circle cx="10.5" cy="10.5" r="10.5"/></clipPath></defs><circle cx="10.5" cy="10.5" r="10.5" fill="#ebeaf0"/><g clip-path="url(#avc)"><path d="M1 21 Q2.5 15 8.5 14.3 H12.5 Q18.5 15 20 21 Z" fill="#121212"/><path d="M8.7 11.5 V15.5 L10.5 16.5 L12.3 15.5 V11.5 Z" fill="#d9a08a"/><ellipse cx="10.5" cy="7.6" rx="3.9" ry="5" fill="#e2ab96"/><path d="M6.4 6.5 Q6.2 0.6 10.5 0.7 Q14.8 0.6 14.6 6.5 Q14 3.2 10.5 3.4 Q7 3.2 6.4 6.5 Z" fill="#4a2f22"/></g></svg></div>
<div class="cell" style="left:399.5px;top:285.1px">Adrian Rogalski (adrian…</div>
<div class="cell" style="left:586.0px;top:285.1px">Offline sources</div>
<div class="cell" style="left:806.0px;top:285.1px">EXTENSION</div>
<div class="a" style="left:1024.5px;top:282.6px;width:21px;height:21px"><svg width="21" height="21" viewBox="0 0 21 21"><defs><clipPath id="avc"><circle cx="10.5" cy="10.5" r="10.5"/></clipPath></defs><circle cx="10.5" cy="10.5" r="10.5" fill="#ebeaf0"/><g clip-path="url(#avc)"><path d="M1 21 Q2.5 15 8.5 14.3 H12.5 Q18.5 15 20 21 Z" fill="#121212"/><path d="M8.7 11.5 V15.5 L10.5 16.5 L12.3 15.5 V11.5 Z" fill="#d9a08a"/><ellipse cx="10.5" cy="7.6" rx="3.9" ry="5" fill="#e2ab96"/><path d="M6.4 6.5 Q6.2 0.6 10.5 0.7 Q14.8 0.6 14.6 6.5 Q14 3.2 10.5 3.4 Q7 3.2 6.4 6.5 Z" fill="#4a2f22"/></g></svg></div>
<div class="cell" style="left:1056.5px;top:285.1px">Adrian Rogalski (adrian…</div>
<div class="cell" style="left:1244.0px;top:285.1px">--</div>
<div class="cell" style="right:89.0px;top:285.1px">0</div>
<div class="a" style="left:0;top:345.6px;width:1730px;height:1px;background:#ebebeb"></div>
<div class="a" style="left:11.0px;top:319.1px;width:18.5px;height:18px;border:1px solid #c6c6c6;border-radius:4px;background:#fff"></div>
<div class="a" style="left:60.0px;top:317.1px;width:22px;height:22px"><svg width="22" height="22" viewBox="0 0 22 22"><path d="M5.5 4.5 H16.5 V13" fill="none" stroke="#35607a" stroke-width="1.1"/><path d="M5.5 4.5 V11" stroke="#8ab8c8" stroke-width="0.9"/><path d="M4.5 12.5 Q8.5 9.8 12.5 12.3 Q15 13.8 17.5 12.8" fill="none" stroke="#f2a444" stroke-width="1.9"/><path d="M5.5 15.2 Q9.5 12.6 13 15 Q15.5 16.6 18 15.6" fill="none" stroke="#2c78b8" stroke-width="1.9"/></svg></div>
<div class="cell" style="left:93.0px;top:320.1px;color:#0b5f63;font-weight:bold;font-size:12px">a..</div>
<div class="a" style="left:92.5px;top:334.7px;width:8px;height:1.7px;background:#8ab8b9"></div>
<div class="cell" style="right:1404.0px;top:320.1px;font-size:12.2px">PLN 47,459,550.29</div>
<div class="a" style="left:367.5px;top:317.6px;width:21px;height:21px"><svg width="21" height="21" viewBox="0 0 21 21"><defs><clipPath id="avc"><circle cx="10.5" cy="10.5" r="10.5"/></clipPath></defs><circle cx="10.5" cy="10.5" r="10.5" fill="#ebeaf0"/><g clip-path="url(#avc)"><path d="M1 21 Q2.5 15 8.5 14.3 H12.5 Q18.5 15 20 21 Z" fill="#121212"/><path d="M8.7 11.5 V15.5 L10.5 16.5 L12.3 15.5 V11.5 Z" fill="#d9a08a"/><ellipse cx="10.5" cy="7.6" rx="3.9" ry="5" fill="#e2ab96"/><path d="M6.4 6.5 Q6.2 0.6 10.5 0.7 Q14.8 0.6 14.6 6.5 Q14 3.2 10.5 3.4 Q7 3.2 6.4 6.5 Z" fill="#4a2f22"/></g></svg></div>
<div class="cell" style="left:399.5px;top:320.1px">Adrian Rogalski (adrian…</div>
<div class="cell" style="left:586.0px;top:320.1px">Offline sources</div>
<div class="cell" style="left:806.0px;top:320.1px">EXTENSION</div>
<div class="a" style="left:1024.5px;top:317.6px;width:21px;height:21px"><svg width="21" height="21" viewBox="0 0 21 21"><defs><clipPath id="avc"><circle cx="10.5" cy="10.5" r="10.5"/></clipPath></defs><circle cx="10.5" cy="10.5" r="10.5" fill="#ebeaf0"/><g clip-path="url(#avc)"><path d="M1 21 Q2.5 15 8.5 14.3 H12.5 Q18.5 15 20 21 Z" fill="#121212"/><path d="M8.7 11.5 V15.5 L10.5 16.5 L12.3 15.5 V11.5 Z" fill="#d9a08a"/><ellipse cx="10.5" cy="7.6" rx="3.9" ry="5" fill="#e2ab96"/><path d="M6.4 6.5 Q6.2 0.6 10.5 0.7 Q14.8 0.6 14.6 6.5 Q14 3.2 10.5 3.4 Q7 3.2 6.4 6.5 Z" fill="#4a2f22"/></g></svg></div>
<div class="cell" style="left:1056.5px;top:320.1px">Adrian Rogalski (adrian…</div>
<div class="cell" style="left:1244.0px;top:320.1px">--</div>
<div class="cell" style="right:89.0px;top:320.1px">0</div>
<div class="a" style="left:0;top:380.7px;width:1730px;height:1px;background:#ebebeb"></div>
<div class="a" style="left:11.0px;top:354.2px;width:18.5px;height:18px;border:1px solid #c6c6c6;border-radius:4px;background:#fff"></div>
<div class="a" style="left:60.0px;top:352.2px;width:22px;height:22px"><svg width="22" height="22" viewBox="0 0 22 22"><path d="M5.5 4.5 H16.5 V13" fill="none" stroke="#35607a" stroke-width="1.1"/><path d="M5.5 4.5 V11" stroke="#8ab8c8" stroke-width="0.9"/><path d="M4.5 12.5 Q8.5 9.8 12.5 12.3 Q15 13.8 17.5 12.8" fill="none" stroke="#f2a444" stroke-width="1.9"/><path d="M5.5 15.2 Q9.5 12.6 13 15 Q15.5 16.6 18 15.6" fill="none" stroke="#2c78b8" stroke-width="1.9"/></svg></div>
<div class="cell" style="left:93.0px;top:355.2px;color:#0b5f63;font-weight:bold;font-size:12px">r...</div>
<div class="a" style="left:92.5px;top:369.8px;width:6px;height:1.7px;background:#8ab8b9"></div>
<div class="cell" style="right:1404.0px;top:355.2px;font-size:12.2px">PLN 47,459,550.29</div>
<div class="a" style="left:367.5px;top:352.7px;width:21px;height:21px"><svg width="21" height="21" viewBox="0 0 21 21"><defs><clipPath id="avc"><circle cx="10.5" cy="10.5" r="10.5"/></clipPath></defs><circle cx="10.5" cy="10.5" r="10.5" fill="#ebeaf0"/><g clip-path="url(#avc)"><path d="M1 21 Q2.5 15 8.5 14.3 H12.5 Q18.5 15 20 21 Z" fill="#121212"/><path d="M8.7 11.5 V15.5 L10.5 16.5 L12.3 15.5 V11.5 Z" fill="#d9a08a"/><ellipse cx="10.5" cy="7.6" rx="3.9" ry="5" fill="#e2ab96"/><path d="M6.4 6.5 Q6.2 0.6 10.5 0.7 Q14.8 0.6 14.6 6.5 Q14 3.2 10.5 3.4 Q7 3.2 6.4 6.5 Z" fill="#4a2f22"/></g></svg></div>
<div class="cell" style="left:399.5px;top:355.2px">Adrian Rogalski (adrian…</div>
<div class="cell" style="left:586.0px;top:355.2px">Offline sources</div>
<div class="cell" style="left:806.0px;top:355.2px">EXTENSION</div>
<div class="a" style="left:1024.5px;top:352.7px;width:21px;height:21px"><svg width="21" height="21" viewBox="0 0 21 21"><defs><clipPath id="avc"><circle cx="10.5" cy="10.5" r="10.5"/></clipPath></defs><circle cx="10.5" cy="10.5" r="10.5" fill="#ebeaf0"/><g clip-path="url(#avc)"><path d="M1 21 Q2.5 15 8.5 14.3 H12.5 Q18.5 15 20 21 Z" fill="#121212"/><path d="M8.7 11.5 V15.5 L10.5 16.5 L12.3 15.5 V11.5 Z" fill="#d9a08a"/><ellipse cx="10.5" cy="7.6" rx="3.9" ry="5" fill="#e2ab96"/><path d="M6.4 6.5 Q6.2 0.6 10.5 0.7 Q14.8 0.6 14.6 6.5 Q14 3.2 10.5 3.4 Q7 3.2 6.4 6.5 Z" fill="#4a2f22"/></g></svg></div>
<div class="cell" style="left:1056.5px;top:355.2px">Adrian Rogalski (adrian…</div>
<div class="cell" style="left:1244.0px;top:355.2px">--</div>
<div class="cell" style="right:89.0px;top:355.2px">0</div>
<div class="a" style="left:0;top:415.8px;width:1730px;height:1px;background:#ebebeb"></div>
<div class="a" style="left:11.0px;top:389.3px;width:18.5px;height:18px;border:1px solid #c6c6c6;border-radius:4px;background:#fff"></div>
<div class="a" style="left:60.0px;top:387.3px;width:22px;height:22px"><svg width="22" height="22" viewBox="0 0 22 22"><path d="M5.5 4.5 H16.5 V13" fill="none" stroke="#35607a" stroke-width="1.1"/><path d="M5.5 4.5 V11" stroke="#8ab8c8" stroke-width="0.9"/><path d="M4.5 12.5 Q8.5 9.8 12.5 12.3 Q15 13.8 17.5 12.8" fill="none" stroke="#f2a444" stroke-width="1.9"/><path d="M5.5 15.2 Q9.5 12.6 13 15 Q15.5 16.6 18 15.6" fill="none" stroke="#2c78b8" stroke-width="1.9"/></svg></div>
<div class="cell" style="left:93.0px;top:390.3px;color:#0b5f63;font-weight:bold;font-size:12px">m.</div>
<div class="a" style="left:92.5px;top:404.9px;width:10px;height:1.7px;background:#8ab8b9"></div>
<div class="cell" style="right:1404.0px;top:390.3px;font-size:12.2px">PLN 47,459,550.29</div>
<div class="a" style="left:367.5px;top:387.8px;width:21px;height:21px"><svg width="21" height="21" viewBox="0 0 21 21"><defs><clipPath id="avc"><circle cx="10.5" cy="10.5" r="10.5"/></clipPath></defs><circle cx="10.5" cy="10.5" r="10.5" fill="#ebeaf0"/><g clip-path="url(#avc)"><path d="M1 21 Q2.5 15 8.5 14.3 H12.5 Q18.5 15 20 21 Z" fill="#121212"/><path d="M8.7 11.5 V15.5 L10.5 16.5 L12.3 15.5 V11.5 Z" fill="#d9a08a"/><ellipse cx="10.5" cy="7.6" rx="3.9" ry="5" fill="#e2ab96"/><path d="M6.4 6.5 Q6.2 0.6 10.5 0.7 Q14.8 0.6 14.6 6.5 Q14 3.2 10.5 3.4 Q7 3.2 6.4 6.5 Z" fill="#4a2f22"/></g></svg></div>
<div class="cell" style="left:399.5px;top:390.3px">Adrian Rogalski (adrian…</div>
<div class="cell" style="left:586.0px;top:390.3px">Offline sources</div>
<div class="cell" style="left:806.0px;top:390.3px">EXTENSION</div>
<div class="a" style="left:1024.5px;top:387.8px;width:21px;height:21px"><svg width="21" height="21" viewBox="0 0 21 21"><defs><clipPath id="avc"><circle cx="10.5" cy="10.5" r="10.5"/></clipPath></defs><circle cx="10.5" cy="10.5" r="10.5" fill="#ebeaf0"/><g clip-path="url(#avc)"><path d="M1 21 Q2.5 15 8.5 14.3 H12.5 Q18.5 15 20 21 Z" fill="#121212"/><path d="M8.7 11.5 V15.5 L10.5 16.5 L12.3 15.5 V11.5 Z" fill="#d9a08a"/><ellipse cx="10.5" cy="7.6" rx="3.9" ry="5" fill="#e2ab96"/><path d="M6.4 6.5 Q6.2 0.6 10.5 0.7 Q14.8 0.6 14.6 6.5 Q14 3.2 10.5 3.4 Q7 3.2 6.4 6.5 Z" fill="#4a2f22"/></g></svg></div>
<div class="cell" style="left:1056.5px;top:390.3px">Adrian Rogalski (adrian…</div>
<div class="cell" style="left:1244.0px;top:390.3px">--</div>
<div class="cell" style="right:89.0px;top:390.3px">0</div>
<div class="a" style="left:0;top:450.9px;width:1730px;height:1px;background:#ebebeb"></div>
<div class="a" style="left:11.0px;top:424.4px;width:18.5px;height:18px;border:1px solid #c6c6c6;border-radius:4px;background:#fff"></div>
<div class="a" style="left:60.0px;top:422.4px;width:22px;height:22px"><svg width="22" height="22" viewBox="0 0 22 22"><circle cx="11" cy="10.3" r="9" fill="#e3250e"/><g stroke="#fff" stroke-width="0.75" fill="none" stroke-linecap="round"><path d="M3 6.8 L14.5 5.8"/><path d="M2.5 8.3 L16.5 7.6"/><path d="M2.2 9.8 L17.5 9.4"/><path d="M2.4 11.3 L16.8 11.2"/><path d="M3 12.8 L15.5 13"/><path d="M4.2 14.3 L13 14.6"/></g><path d="M14 17.5 L16.2 20.5 M15.5 17 L17.5 19" stroke="#e3250e" stroke-width="1.1"/></svg></div>
<div class="cell" style="left:93.0px;top:425.4px;color:#0b5f63;font-weight:bold;font-size:12px">J..</div>
<div class="a" style="left:92.5px;top:440.0px;width:6px;height:1.7px;background:#8ab8b9"></div>
<div class="cell" style="right:1404.0px;top:425.4px;font-size:12.2px">PLN 12,200,066.74</div>
<div class="a" style="left:367.5px;top:422.9px;width:21px;height:21px"><svg width="21" height="21" viewBox="0 0 21 21"><defs><clipPath id="avc"><circle cx="10.5" cy="10.5" r="10.5"/></clipPath></defs><circle cx="10.5" cy="10.5" r="10.5" fill="#ebeaf0"/><g clip-path="url(#avc)"><path d="M1 21 Q2.5 15 8.5 14.3 H12.5 Q18.5 15 20 21 Z" fill="#121212"/><path d="M8.7 11.5 V15.5 L10.5 16.5 L12.3 15.5 V11.5 Z" fill="#d9a08a"/><ellipse cx="10.5" cy="7.6" rx="3.9" ry="5" fill="#e2ab96"/><path d="M6.4 6.5 Q6.2 0.6 10.5 0.7 Q14.8 0.6 14.6 6.5 Q14 3.2 10.5 3.4 Q7 3.2 6.4 6.5 Z" fill="#4a2f22"/></g></svg></div>
<div class="cell" style="left:399.5px;top:425.4px">Adrian Rogalski (adrian…</div>
<div class="cell" style="left:586.0px;top:425.4px">Offline sources</div>
<div class="cell" style="left:806.0px;top:425.4px">EXTENSION</div>
<div class="a" style="left:1024.5px;top:422.9px;width:21px;height:21px"><svg width="21" height="21" viewBox="0 0 21 21"><defs><clipPath id="avc"><circle cx="10.5" cy="10.5" r="10.5"/></clipPath></defs><circle cx="10.5" cy="10.5" r="10.5" fill="#ebeaf0"/><g clip-path="url(#avc)"><path d="M1 21 Q2.5 15 8.5 14.3 H12.5 Q18.5 15 20 21 Z" fill="#121212"/><path d="M8.7 11.5 V15.5 L10.5 16.5 L12.3 15.5 V11.5 Z" fill="#d9a08a"/><ellipse cx="10.5" cy="7.6" rx="3.9" ry="5" fill="#e2ab96"/><path d="M6.4 6.5 Q6.2 0.6 10.5 0.7 Q14.8 0.6 14.6 6.5 Q14 3.2 10.5 3.4 Q7 3.2 6.4 6.5 Z" fill="#4a2f22"/></g></svg></div>
<div class="cell" style="left:1056.5px;top:425.4px">Adrian Rogalski (adrian…</div>
<div class="cell" style="left:1244.0px;top:425.4px">--</div>
<div class="cell" style="right:89.0px;top:425.4px">0</div>
<div class="a" style="left:0;top:486.0px;width:1730px;height:1px;background:#ebebeb"></div>
<div class="a" style="left:11.0px;top:459.5px;width:18.5px;height:18px;border:1px solid #c6c6c6;border-radius:4px;background:#fff"></div>
<div class="a" style="left:60.0px;top:457.5px;width:22px;height:22px"><svg width="22" height="22" viewBox="0 0 22 22"><circle cx="11" cy="10.3" r="9" fill="#e3250e"/><g stroke="#fff" stroke-width="0.75" fill="none" stroke-linecap="round"><path d="M3 6.8 L14.5 5.8"/><path d="M2.5 8.3 L16.5 7.6"/><path d="M2.2 9.8 L17.5 9.4"/><path d="M2.4 11.3 L16.8 11.2"/><path d="M3 12.8 L15.5 13"/><path d="M4.2 14.3 L13 14.6"/></g><path d="M14 17.5 L16.2 20.5 M15.5 17 L17.5 19" stroke="#e3250e" stroke-width="1.1"/></svg></div>
<div class="cell" style="left:93.0px;top:460.5px;color:#0b5f63;font-weight:bold;font-size:12px">M.</div>
<div class="a" style="left:92.5px;top:475.1px;width:10px;height:1.7px;background:#8ab8b9"></div>
<div class="cell" style="right:1404.0px;top:460.5px;font-size:12.2px">PLN 12,200,066.74</div>
<div class="a" style="left:367.5px;top:458.0px;width:21px;height:21px"><svg width="21" height="21" viewBox="0 0 21 21"><defs><clipPath id="avc"><circle cx="10.5" cy="10.5" r="10.5"/></clipPath></defs><circle cx="10.5" cy="10.5" r="10.5" fill="#ebeaf0"/><g clip-path="url(#avc)"><path d="M1 21 Q2.5 15 8.5 14.3 H12.5 Q18.5 15 20 21 Z" fill="#121212"/><path d="M8.7 11.5 V15.5 L10.5 16.5 L12.3 15.5 V11.5 Z" fill="#d9a08a"/><ellipse cx="10.5" cy="7.6" rx="3.9" ry="5" fill="#e2ab96"/><path d="M6.4 6.5 Q6.2 0.6 10.5 0.7 Q14.8 0.6 14.6 6.5 Q14 3.2 10.5 3.4 Q7 3.2 6.4 6.5 Z" fill="#4a2f22"/></g></svg></div>
<div class="cell" style="left:399.5px;top:460.5px">Adrian Rogalski (adrian…</div>
<div class="cell" style="left:586.0px;top:460.5px">Offline sources</div>
<div class="cell" style="left:806.0px;top:460.5px">EXTENSION</div>
<div class="a" style="left:1024.5px;top:458.0px;width:21px;height:21px"><svg width="21" height="21" viewBox="0 0 21 21"><defs><clipPath id="avc"><circle cx="10.5" cy="10.5" r="10.5"/></clipPath></defs><circle cx="10.5" cy="10.5" r="10.5" fill="#ebeaf0"/><g clip-path="url(#avc)"><path d="M1 21 Q2.5 15 8.5 14.3 H12.5 Q18.5 15 20 21 Z" fill="#121212"/><path d="M8.7 11.5 V15.5 L10.5 16.5 L12.3 15.5 V11.5 Z" fill="#d9a08a"/><ellipse cx="10.5" cy="7.6" rx="3.9" ry="5" fill="#e2ab96"/><path d="M6.4 6.5 Q6.2 0.6 10.5 0.7 Q14.8 0.6 14.6 6.5 Q14 3.2 10.5 3.4 Q7 3.2 6.4 6.5 Z" fill="#4a2f22"/></g></svg></div>
<div class="cell" style="left:1056.5px;top:460.5px">Adrian Rogalski (adrian…</div>
<div class="cell" style="left:1244.0px;top:460.5px">--</div>
<div class="cell" style="right:89.0px;top:460.5px">0</div>
<div class="a" style="left:0;top:521.0px;width:1730px;height:1px;background:#ebebeb"></div>
<div class="a" style="left:11.0px;top:494.5px;width:18.5px;height:18px;border:1px solid #c6c6c6;border-radius:4px;background:#fff"></div>
<div class="a" style="left:60.0px;top:492.5px;width:22px;height:22px"><svg width="22" height="22" viewBox="0 0 22 22"><path d="M11 1.2 L19.3 6 V15.8 L11 20.6 L2.7 15.8 V6 Z" fill="#8c2450"/><path d="M11 1.2 L15.2 3.6 L11 6 Z" fill="#6e1c48"/><path d="M15.2 3.6 L19.3 6 L15.2 8.4 Z" fill="#d9504a"/><path d="M11 6 L15.2 3.6 L15.2 8.4 Z" fill="#e56a56"/><path d="M6.8 3.6 L11 6 L6.8 8.4 Z" fill="#c43a4a"/><path d="M2.7 6 L6.8 8.4 L2.7 10.9 Z" fill="#5e1a45"/><path d="M6.8 8.4 L11 10.9 L6.8 13.3 Z" fill="#f07a5a"/><path d="M11 6 L15.2 8.4 L11 10.9 Z" fill="#e0443e"/><path d="M15.2 8.4 L19.3 10.9 L15.2 13.3 Z" fill="#f29a86"/><path d="M11 10.9 L15.2 13.3 L11 15.8 Z" fill="#d63e44"/><path d="M6.8 13.3 L11 15.8 L6.8 18.2 Z" fill="#e8604e"/><path d="M2.7 10.9 L6.8 13.3 L2.7 15.8 Z" fill="#a82c52"/><path d="M15.2 13.3 L19.3 15.8 L15.2 18.2 Z" fill="#b8344e"/><path d="M11 15.8 L15.2 18.2 L11 20.6 Z" fill="#6a1c48"/></svg></div>
<div class="cell" style="left:93.0px;top:495.5px;color:#0b5f63;font-weight:bold;font-size:12px">R..</div>
<div class="a" style="left:92.5px;top:510.1px;width:8px;height:1.7px;background:#8ab8b9"></div>
<div class="cell" style="right:1404.0px;top:495.5px;font-size:12.2px">PLN 21,415,873.16</div>
<div class="a" style="left:367.5px;top:493.0px;width:21px;height:21px"><svg width="21" height="21" viewBox="0 0 21 21"><defs><clipPath id="avc"><circle cx="10.5" cy="10.5" r="10.5"/></clipPath></defs><circle cx="10.5" cy="10.5" r="10.5" fill="#ebeaf0"/><g clip-path="url(#avc)"><path d="M1 21 Q2.5 15 8.5 14.3 H12.5 Q18.5 15 20 21 Z" fill="#121212"/><path d="M8.7 11.5 V15.5 L10.5 16.5 L12.3 15.5 V11.5 Z" fill="#d9a08a"/><ellipse cx="10.5" cy="7.6" rx="3.9" ry="5" fill="#e2ab96"/><path d="M6.4 6.5 Q6.2 0.6 10.5 0.7 Q14.8 0.6 14.6 6.5 Q14 3.2 10.5 3.4 Q7 3.2 6.4 6.5 Z" fill="#4a2f22"/></g></svg></div>
<div class="cell" style="left:399.5px;top:495.5px">Adrian Rogalski (adrian…</div>
<div class="cell" style="left:586.0px;top:495.5px">Offline sources</div>
<div class="cell" style="left:806.0px;top:495.5px">EXTENSION</div>
<div class="a" style="left:1024.5px;top:493.0px;width:21px;height:21px"><svg width="21" height="21" viewBox="0 0 21 21"><defs><clipPath id="avc"><circle cx="10.5" cy="10.5" r="10.5"/></clipPath></defs><circle cx="10.5" cy="10.5" r="10.5" fill="#ebeaf0"/><g clip-path="url(#avc)"><path d="M1 21 Q2.5 15 8.5 14.3 H12.5 Q18.5 15 20 21 Z" fill="#121212"/><path d="M8.7 11.5 V15.5 L10.5 16.5 L12.3 15.5 V11.5 Z" fill="#d9a08a"/><ellipse cx="10.5" cy="7.6" rx="3.9" ry="5" fill="#e2ab96"/><path d="M6.4 6.5 Q6.2 0.6 10.5 0.7 Q14.8 0.6 14.6 6.5 Q14 3.2 10.5 3.4 Q7 3.2 6.4 6.5 Z" fill="#4a2f22"/></g></svg></div>
<div class="cell" style="left:1056.5px;top:495.5px">Adrian Rogalski (adrian…</div>
<div class="cell" style="left:1244.0px;top:495.5px">--</div>
<div class="cell" style="right:89.0px;top:495.5px">1</div>
<div class="a" style="left:0;top:556.1px;width:1730px;height:1px;background:#ebebeb"></div>
<div class="a" style="left:11.0px;top:529.6px;width:18.5px;height:18px;border:1px solid #c6c6c6;border-radius:4px;background:#fff"></div>
<div class="a" style="left:60.0px;top:527.6px;width:22px;height:22px"><svg width="22" height="22" viewBox="0 0 22 22"><path d="M11 1.2 L19.3 6 V15.8 L11 20.6 L2.7 15.8 V6 Z" fill="#8c2450"/><path d="M11 1.2 L15.2 3.6 L11 6 Z" fill="#6e1c48"/><path d="M15.2 3.6 L19.3 6 L15.2 8.4 Z" fill="#d9504a"/><path d="M11 6 L15.2 3.6 L15.2 8.4 Z" fill="#e56a56"/><path d="M6.8 3.6 L11 6 L6.8 8.4 Z" fill="#c43a4a"/><path d="M2.7 6 L6.8 8.4 L2.7 10.9 Z" fill="#5e1a45"/><path d="M6.8 8.4 L11 10.9 L6.8 13.3 Z" fill="#f07a5a"/><path d="M11 6 L15.2 8.4 L11 10.9 Z" fill="#e0443e"/><path d="M15.2 8.4 L19.3 10.9 L15.2 13.3 Z" fill="#f29a86"/><path d="M11 10.9 L15.2 13.3 L11 15.8 Z" fill="#d63e44"/><path d="M6.8 13.3 L11 15.8 L6.8 18.2 Z" fill="#e8604e"/><path d="M2.7 10.9 L6.8 13.3 L2.7 15.8 Z" fill="#a82c52"/><path d="M15.2 13.3 L19.3 15.8 L15.2 18.2 Z" fill="#b8344e"/><path d="M11 15.8 L15.2 18.2 L11 20.6 Z" fill="#6a1c48"/></svg></div>
<div class="cell" style="left:93.0px;top:530.6px;color:#0b5f63;font-weight:bold;font-size:12px">E..</div>
<div class="a" style="left:92.5px;top:545.2px;width:7px;height:1.7px;background:#8ab8b9"></div>
<div class="cell" style="right:1404.0px;top:530.6px;font-size:12.2px">PLN 21,415,873.16</div>
<div class="a" style="left:367.5px;top:528.1px;width:21px;height:21px"><svg width="21" height="21" viewBox="0 0 21 21"><defs><clipPath id="avc"><circle cx="10.5" cy="10.5" r="10.5"/></clipPath></defs><circle cx="10.5" cy="10.5" r="10.5" fill="#ebeaf0"/><g clip-path="url(#avc)"><path d="M1 21 Q2.5 15 8.5 14.3 H12.5 Q18.5 15 20 21 Z" fill="#121212"/><path d="M8.7 11.5 V15.5 L10.5 16.5 L12.3 15.5 V11.5 Z" fill="#d9a08a"/><ellipse cx="10.5" cy="7.6" rx="3.9" ry="5" fill="#e2ab96"/><path d="M6.4 6.5 Q6.2 0.6 10.5 0.7 Q14.8 0.6 14.6 6.5 Q14 3.2 10.5 3.4 Q7 3.2 6.4 6.5 Z" fill="#4a2f22"/></g></svg></div>
<div class="cell" style="left:399.5px;top:530.6px">Adrian Rogalski (adrian…</div>
<div class="cell" style="left:586.0px;top:530.6px">Offline sources</div>
<div class="cell" style="left:806.0px;top:530.6px">EXTENSION</div>
<div class="a" style="left:1024.5px;top:528.1px;width:21px;height:21px"><svg width="21" height="21" viewBox="0 0 21 21"><defs><clipPath id="avc"><circle cx="10.5" cy="10.5" r="10.5"/></clipPath></defs><circle cx="10.5" cy="10.5" r="10.5" fill="#ebeaf0"/><g clip-path="url(#avc)"><path d="M1 21 Q2.5 15 8.5 14.3 H12.5 Q18.5 15 20 21 Z" fill="#121212"/><path d="M8.7 11.5 V15.5 L10.5 16.5 L12.3 15.5 V11.5 Z" fill="#d9a08a"/><ellipse cx="10.5" cy="7.6" rx="3.9" ry="5" fill="#e2ab96"/><path d="M6.4 6.5 Q6.2 0.6 10.5 0.7 Q14.8 0.6 14.6 6.5 Q14 3.2 10.5 3.4 Q7 3.2 6.4 6.5 Z" fill="#4a2f22"/></g></svg></div>
<div class="cell" style="left:1056.5px;top:530.6px">Adrian Rogalski (adrian…</div>
<div class="cell" style="left:1244.0px;top:530.6px">--</div>
<div class="cell" style="right:89.0px;top:530.6px">0</div>
<div class="a" style="left:0;top:591.2px;width:1730px;height:1px;background:#ebebeb"></div>
<div class="a" style="left:11.0px;top:564.7px;width:18.5px;height:18px;border:1px solid #c6c6c6;border-radius:4px;background:#fff"></div>
<div class="a" style="left:60.0px;top:562.7px;width:22px;height:22px"><svg width="22" height="22" viewBox="0 0 22 22"><path d="M11 1.2 L19.3 6 V15.8 L11 20.6 L2.7 15.8 V6 Z" fill="#8c2450"/><path d="M11 1.2 L15.2 3.6 L11 6 Z" fill="#6e1c48"/><path d="M15.2 3.6 L19.3 6 L15.2 8.4 Z" fill="#d9504a"/><path d="M11 6 L15.2 3.6 L15.2 8.4 Z" fill="#e56a56"/><path d="M6.8 3.6 L11 6 L6.8 8.4 Z" fill="#c43a4a"/><path d="M2.7 6 L6.8 8.4 L2.7 10.9 Z" fill="#5e1a45"/><path d="M6.8 8.4 L11 10.9 L6.8 13.3 Z" fill="#f07a5a"/><path d="M11 6 L15.2 8.4 L11 10.9 Z" fill="#e0443e"/><path d="M15.2 8.4 L19.3 10.9 L15.2 13.3 Z" fill="#f29a86"/><path d="M11 10.9 L15.2 13.3 L11 15.8 Z" fill="#d63e44"/><path d="M6.8 13.3 L11 15.8 L6.8 18.2 Z" fill="#e8604e"/><path d="M2.7 10.9 L6.8 13.3 L2.7 15.8 Z" fill="#a82c52"/><path d="M15.2 13.3 L19.3 15.8 L15.2 18.2 Z" fill="#b8344e"/><path d="M11 15.8 L15.2 18.2 L11 20.6 Z" fill="#6a1c48"/></svg></div>
<div class="cell" style="left:93.0px;top:565.7px;color:#0b5f63;font-weight:bold;font-size:12px">S..</div>
<div class="a" style="left:92.5px;top:580.3px;width:8px;height:1.7px;background:#8ab8b9"></div>
<div class="cell" style="right:1404.0px;top:565.7px;font-size:12.2px">PLN 21,415,873.16</div>
<div class="a" style="left:367.5px;top:563.2px;width:21px;height:21px"><svg width="21" height="21" viewBox="0 0 21 21"><defs><clipPath id="avc"><circle cx="10.5" cy="10.5" r="10.5"/></clipPath></defs><circle cx="10.5" cy="10.5" r="10.5" fill="#ebeaf0"/><g clip-path="url(#avc)"><path d="M1 21 Q2.5 15 8.5 14.3 H12.5 Q18.5 15 20 21 Z" fill="#121212"/><path d="M8.7 11.5 V15.5 L10.5 16.5 L12.3 15.5 V11.5 Z" fill="#d9a08a"/><ellipse cx="10.5" cy="7.6" rx="3.9" ry="5" fill="#e2ab96"/><path d="M6.4 6.5 Q6.2 0.6 10.5 0.7 Q14.8 0.6 14.6 6.5 Q14 3.2 10.5 3.4 Q7 3.2 6.4 6.5 Z" fill="#4a2f22"/></g></svg></div>
<div class="cell" style="left:399.5px;top:565.7px">Adrian Rogalski (adrian…</div>
<div class="cell" style="left:586.0px;top:565.7px">Direct traffic</div>
<div class="cell" style="left:806.0px;top:565.7px;color:#0b5f63;font-weight:bold;border-bottom:1px solid #0b5f63;line-height:15px">www.businessweb.pl/</div>
<svg class="a" style="left:941.0px;top:567.7px" width="11" height="11" viewBox="0 0 11 11"><path d="M8.5 6 V9.5 H1.5 V2.5 H5 M6.5 1 H10 V4.5 M10 1 L5 6" fill="none" stroke="#0b7a7e" stroke-width="1.1"/></svg>
<div class="cell" style="left:1025.0px;top:565.7px">--</div>
<div class="cell" style="left:1244.0px;top:565.7px">Cele Sprzedażowe w HubSpo…</div>
<div class="cell" style="right:89.0px;top:565.7px">7</div>
<div class="a" style="left:0;top:626.3px;width:1730px;height:1px;background:#ebebeb"></div>
<div class="a" style="left:11.0px;top:599.8px;width:18.5px;height:18px;border:1px solid #c6c6c6;border-radius:4px;background:#fff"></div>
<div class="a" style="left:60.0px;top:597.8px;width:22px;height:22px"><svg width="22" height="22" viewBox="0 0 22 22"><circle cx="11.2" cy="10.8" r="10.3" fill="#d10f1b"/><path d="M3 10.3 Q3.6 3.1 10.6 2.9 Q17.3 3.1 19 11.6 Z" fill="#fff"/><ellipse cx="9.9" cy="8" rx="2.9" ry="1.6" fill="#d10f1b" transform="rotate(12 9.9 8)"/><path d="M4.9 12.9 Q6.6 18.2 10.5 18.1 Q14 17.9 15.8 14.7" fill="none" stroke="#fff" stroke-width="1.9"/></svg></div>
<div class="cell" style="left:93.0px;top:600.8px;color:#0b5f63;font-weight:bold;font-size:12px">M.</div>
<div class="a" style="left:92.5px;top:615.4px;width:10px;height:1.7px;background:#8ab8b9"></div>
<div class="cell" style="right:1404.0px;top:600.8px;font-size:12.2px">PLN 106,332,685.34</div>
<div class="a" style="left:367.5px;top:598.3px;width:21px;height:21px"><svg width="21" height="21" viewBox="0 0 21 21"><defs><clipPath id="avc"><circle cx="10.5" cy="10.5" r="10.5"/></clipPath></defs><circle cx="10.5" cy="10.5" r="10.5" fill="#ebeaf0"/><g clip-path="url(#avc)"><path d="M1 21 Q2.5 15 8.5 14.3 H12.5 Q18.5 15 20 21 Z" fill="#121212"/><path d="M8.7 11.5 V15.5 L10.5 16.5 L12.3 15.5 V11.5 Z" fill="#d9a08a"/><ellipse cx="10.5" cy="7.6" rx="3.9" ry="5" fill="#e2ab96"/><path d="M6.4 6.5 Q6.2 0.6 10.5 0.7 Q14.8 0.6 14.6 6.5 Q14 3.2 10.5 3.4 Q7 3.2 6.4 6.5 Z" fill="#4a2f22"/></g></svg></div>
<div class="cell" style="left:399.5px;top:600.8px">Adrian Rogalski (adrian…</div>
<div class="cell" style="left:586.0px;top:600.8px">Offline sources</div>
<div class="cell" style="left:806.0px;top:600.8px">EXTENSION</div>
<div class="a" style="left:1024.5px;top:598.3px;width:21px;height:21px"><svg width="21" height="21" viewBox="0 0 21 21"><defs><clipPath id="avc"><circle cx="10.5" cy="10.5" r="10.5"/></clipPath></defs><circle cx="10.5" cy="10.5" r="10.5" fill="#ebeaf0"/><g clip-path="url(#avc)"><path d="M1 21 Q2.5 15 8.5 14.3 H12.5 Q18.5 15 20 21 Z" fill="#121212"/><path d="M8.7 11.5 V15.5 L10.5 16.5 L12.3 15.5 V11.5 Z" fill="#d9a08a"/><ellipse cx="10.5" cy="7.6" rx="3.9" ry="5" fill="#e2ab96"/><path d="M6.4 6.5 Q6.2 0.6 10.5 0.7 Q14.8 0.6 14.6 6.5 Q14 3.2 10.5 3.4 Q7 3.2 6.4 6.5 Z" fill="#4a2f22"/></g></svg></div>
<div class="cell" style="left:1056.5px;top:600.8px">Adrian Rogalski (adrian…</div>
<div class="cell" style="left:1244.0px;top:600.8px">--</div>
<div class="cell" style="right:89.0px;top:600.8px">1</div>
<div class="a" style="left:0;top:661.4px;width:1730px;height:1px;background:#ebebeb"></div>
<div class="a" style="left:11.0px;top:634.9px;width:18.5px;height:18px;border:1px solid #c6c6c6;border-radius:4px;background:#fff"></div>
<div class="a" style="left:60.0px;top:632.9px;width:22px;height:22px"><svg width="22" height="22" viewBox="0 0 22 22"><circle cx="11.2" cy="10.8" r="10.3" fill="#d10f1b"/><path d="M3 10.3 Q3.6 3.1 10.6 2.9 Q17.3 3.1 19 11.6 Z" fill="#fff"/><ellipse cx="9.9" cy="8" rx="2.9" ry="1.6" fill="#d10f1b" transform="rotate(12 9.9 8)"/><path d="M4.9 12.9 Q6.6 18.2 10.5 18.1 Q14 17.9 15.8 14.7" fill="none" stroke="#fff" stroke-width="1.9"/></svg></div>
<div class="cell" style="left:93.0px;top:635.9px;color:#0b5f63;font-weight:bold;font-size:12px">A..</div>
<div class="a" style="left:92.5px;top:650.5px;width:9px;height:1.7px;background:#8ab8b9"></div>
<div class="cell" style="right:1404.0px;top:635.9px;font-size:12.2px">PLN 106,332,685.34</div>
<div class="a" style="left:367.5px;top:633.4px;width:21px;height:21px"><svg width="21" height="21" viewBox="0 0 21 21"><defs><clipPath id="avc"><circle cx="10.5" cy="10.5" r="10.5"/></clipPath></defs><circle cx="10.5" cy="10.5" r="10.5" fill="#ebeaf0"/><g clip-path="url(#avc)"><path d="M1 21 Q2.5 15 8.5 14.3 H12.5 Q18.5 15 20 21 Z" fill="#121212"/><path d="M8.7 11.5 V15.5 L10.5 16.5 L12.3 15.5 V11.5 Z" fill="#d9a08a"/><ellipse cx="10.5" cy="7.6" rx="3.9" ry="5" fill="#e2ab96"/><path d="M6.4 6.5 Q6.2 0.6 10.5 0.7 Q14.8 0.6 14.6 6.5 Q14 3.2 10.5 3.4 Q7 3.2 6.4 6.5 Z" fill="#4a2f22"/></g></svg></div>
<div class="cell" style="left:399.5px;top:635.9px">Adrian Rogalski (adrian…</div>
<div class="cell" style="left:586.0px;top:635.9px">Offline sources</div>
<div class="cell" style="left:806.0px;top:635.9px">EXTENSION</div>
<div class="a" style="left:1024.5px;top:633.4px;width:21px;height:21px"><svg width="21" height="21" viewBox="0 0 21 21"><defs><clipPath id="avc"><circle cx="10.5" cy="10.5" r="10.5"/></clipPath></defs><circle cx="10.5" cy="10.5" r="10.5" fill="#ebeaf0"/><g clip-path="url(#avc)"><path d="M1 21 Q2.5 15 8.5 14.3 H12.5 Q18.5 15 20 21 Z" fill="#121212"/><path d="M8.7 11.5 V15.5 L10.5 16.5 L12.3 15.5 V11.5 Z" fill="#d9a08a"/><ellipse cx="10.5" cy="7.6" rx="3.9" ry="5" fill="#e2ab96"/><path d="M6.4 6.5 Q6.2 0.6 10.5 0.7 Q14.8 0.6 14.6 6.5 Q14 3.2 10.5 3.4 Q7 3.2 6.4 6.5 Z" fill="#4a2f22"/></g></svg></div>
<div class="cell" style="left:1056.5px;top:635.9px">Adrian Rogalski (adrian…</div>
<div class="cell" style="left:1244.0px;top:635.9px">--</div>
<div class="cell" style="right:89.0px;top:635.9px">0</div>
<div class="a" style="left:0;top:641px;width:1730px;height:15px;background:linear-gradient(rgba(255,255,255,0),rgba(246,248,248,.8))"></div>
<div class="a" style="left:1708px;top:39px;width:21px;height:620px;background:linear-gradient(90deg,rgba(255,255,255,0),rgba(238,238,238,.6))"></div>
<div class="a" style="left:0;top:0;width:1730px;height:39px;background:#f5f0f6;border-bottom:1px solid #e0dce0"></div>
<div class="a" style="left:345.5px;top:0;width:219px;height:39px;background:#e3d8e6;border-bottom:1px solid #e0dce0"></div>
<div class="a" style="left:11px;top:10px;width:18.5px;height:18px;border:1px solid #c6c6c6;border-radius:4px;background:#fff"></div>
<div class="a" style="left:38.0px;top:0;width:1px;height:39px;background:#dedede"></div>
<div class="a" style="left:126.0px;top:0;width:1px;height:39px;background:#dedede"></div>
<div class="a" style="left:345.0px;top:0;width:1px;height:39px;background:#dedede"></div>
<div class="a" style="left:564.0px;top:0;width:1px;height:39px;background:#dedede"></div>
<div class="a" style="left:783.0px;top:0;width:1px;height:39px;background:#dedede"></div>
<div class="a" style="left:1002.0px;top:0;width:1px;height:39px;background:#dedede"></div>
<div class="a" style="left:1221.0px;top:0;width:1px;height:39px;background:#dedede"></div>
<div class="a" style="left:1440.0px;top:0;width:1px;height:39px;background:#dedede"></div>
<div class="a" style="left:1659.0px;top:0;width:1px;height:39px;background:#dedede"></div>
<div class="th" style="left:60.5px">N.</div>
<svg class="a" style="left:80.5px;top:12.5px" width="9" height="15" viewBox="0 0 9 15"><path d="M4.5 1.5 L7.5 5.5 H1.5 Z" fill="#888"/><path d="M4.5 13.5 L7.5 9.5 H1.5 Z" fill="#888"/></svg>
<div class="a" style="left:95.0px;top:9px;width:21px;height:20.5px;border:1px solid #cdc8cd;border-radius:4px"></div><svg class="a" style="left:103.5px;top:13px" width="4" height="12" viewBox="0 0 4 12"><circle cx="2" cy="1.8" r="0.95" fill="#555"/><circle cx="2" cy="6" r="0.95" fill="#555"/><circle cx="2" cy="10.2" r="0.95" fill="#555"/></svg>
<div class="th" style="left:148.0px">Obrót firmy</div>
<svg class="a" style="left:299.5px;top:12.5px" width="9" height="15" viewBox="0 0 9 15"><path d="M4.5 1.5 L7.5 5.5 H1.5 Z" fill="#888"/><path d="M4.5 13.5 L7.5 9.5 H1.5 Z" fill="#888"/></svg>
<div class="a" style="left:314.5px;top:9px;width:21px;height:20.5px;border:1px solid #cdc8cd;border-radius:4px"></div><svg class="a" style="left:323.0px;top:13px" width="4" height="12" viewBox="0 0 4 12"><circle cx="2" cy="1.8" r="0.95" fill="#555"/><circle cx="2" cy="6" r="0.95" fill="#555"/><circle cx="2" cy="10.2" r="0.95" fill="#555"/></svg>
<div class="th" style="left:367.0px">Contact owner</div>
<svg class="a" style="left:518.5px;top:12.5px" width="9" height="15" viewBox="0 0 9 15"><path d="M4.5 1.5 L7.5 5.5 H1.5 Z" fill="#999"/><path d="M4.5 13.5 L7.5 9.5 H1.5 Z" fill="#222"/></svg>
<div class="a" style="left:533.5px;top:9px;width:21px;height:20.5px;border:1px solid #cdc8cd;border-radius:4px"></div><svg class="a" style="left:542.0px;top:13px" width="4" height="12" viewBox="0 0 4 12"><circle cx="2" cy="1.8" r="0.95" fill="#555"/><circle cx="2" cy="6" r="0.95" fill="#555"/><circle cx="2" cy="10.2" r="0.95" fill="#555"/></svg>
<div class="th" style="left:586.0px">Original Source</div>
<svg class="a" style="left:737.5px;top:12.5px" width="9" height="15" viewBox="0 0 9 15"><path d="M4.5 1.5 L7.5 5.5 H1.5 Z" fill="#888"/><path d="M4.5 13.5 L7.5 9.5 H1.5 Z" fill="#888"/></svg>
<div class="a" style="left:752.5px;top:9px;width:21px;height:20.5px;border:1px solid #cdc8cd;border-radius:4px"></div><svg class="a" style="left:761.0px;top:13px" width="4" height="12" viewBox="0 0 4 12"><circle cx="2" cy="1.8" r="0.95" fill="#555"/><circle cx="2" cy="6" r="0.95" fill="#555"/><circle cx="2" cy="10.2" r="0.95" fill="#555"/></svg>
<div class="th" style="left:805.0px">Original Source Drill-Dow…</div>
<svg class="a" style="left:956.5px;top:12.5px" width="9" height="15" viewBox="0 0 9 15"><path d="M4.5 1.5 L7.5 5.5 H1.5 Z" fill="#888"/><path d="M4.5 13.5 L7.5 9.5 H1.5 Z" fill="#888"/></svg>
<div class="a" style="left:971.5px;top:9px;width:21px;height:20.5px;border:1px solid #cdc8cd;border-radius:4px"></div><svg class="a" style="left:980.0px;top:13px" width="4" height="12" viewBox="0 0 4 12"><circle cx="2" cy="1.8" r="0.95" fill="#555"/><circle cx="2" cy="6" r="0.95" fill="#555"/><circle cx="2" cy="10.2" r="0.95" fill="#555"/></svg>
<div class="th" style="left:1024.0px">Original Source Drill-Dow…</div>
<svg class="a" style="left:1175.5px;top:12.5px" width="9" height="15" viewBox="0 0 9 15"><path d="M4.5 1.5 L7.5 5.5 H1.5 Z" fill="#888"/><path d="M4.5 13.5 L7.5 9.5 H1.5 Z" fill="#888"/></svg>
<div class="a" style="left:1190.5px;top:9px;width:21px;height:20.5px;border:1px solid #cdc8cd;border-radius:4px"></div><svg class="a" style="left:1199.0px;top:13px" width="4" height="12" viewBox="0 0 4 12"><circle cx="2" cy="1.8" r="0.95" fill="#555"/><circle cx="2" cy="6" r="0.95" fill="#555"/><circle cx="2" cy="10.2" r="0.95" fill="#555"/></svg>
<div class="th" style="left:1243.0px">First Conversion</div>
<svg class="a" style="left:1394.5px;top:12.5px" width="9" height="15" viewBox="0 0 9 15"><path d="M4.5 1.5 L7.5 5.5 H1.5 Z" fill="#888"/><path d="M4.5 13.5 L7.5 9.5 H1.5 Z" fill="#888"/></svg>
<div class="a" style="left:1409.5px;top:9px;width:21px;height:20.5px;border:1px solid #cdc8cd;border-radius:4px"></div><svg class="a" style="left:1418.0px;top:13px" width="4" height="12" viewBox="0 0 4 12"><circle cx="2" cy="1.8" r="0.95" fill="#555"/><circle cx="2" cy="6" r="0.95" fill="#555"/><circle cx="2" cy="10.2" r="0.95" fill="#555"/></svg>
<div class="th" style="left:1462.0px">Average Pageviews</div>
<svg class="a" style="left:1613.5px;top:12.5px" width="9" height="15" viewBox="0 0 9 15"><path d="M4.5 1.5 L7.5 5.5 H1.5 Z" fill="#888"/><path d="M4.5 13.5 L7.5 9.5 H1.5 Z" fill="#888"/></svg>
<div class="a" style="left:1628.5px;top:9px;width:21px;height:20.5px;border:1px solid #cdc8cd;border-radius:4px"></div><svg class="a" style="left:1637.0px;top:13px" width="4" height="12" viewBox="0 0 4 12"><circle cx="2" cy="1.8" r="0.95" fill="#555"/><circle cx="2" cy="6" r="0.95" fill="#555"/><circle cx="2" cy="10.2" r="0.95" fill="#555"/></svg>
<div class="th" style="left:1681.0px">Number of</div>
</div>
<div class="a" style="left:240px;top:183px;width:1728.5px;height:656px;border:1px solid #e3e3e3;border-radius:6px"></div>
<svg class="a" style="left:833px;top:860px" width="8" height="13" viewBox="0 0 8 13"><path d="M6.5 1 L1.5 6.5 L6.5 12" fill="none" stroke="#999" stroke-width="1.2"/></svg>
<div class="a" style="left:851px;top:859px;font-weight:bold;font-size:12.5px;line-height:16px;color:#8a8a8a">Prev</div>
<div class="a" style="left:884.5px;top:854px;width:18px;height:24.5px;border:1px solid #c8c8c8;border-radius:3px;background:#e9e9e9"></div>

<div class="a" style="left:878.5px;top:859px;width:30px;text-align:center;font-weight:bold;font-size:12.5px;line-height:16px;color:#0f0f0f;-webkit-text-stroke:0.15px #0f0f0f">1</div>
<div class="a" style="left:906.5px;top:859px;width:30px;text-align:center;font-weight:bold;font-size:12.5px;line-height:16px;color:#0f0f0f;-webkit-text-stroke:0.15px #0f0f0f">2</div>
<div class="a" style="left:936.0px;top:859px;width:30px;text-align:center;font-weight:bold;font-size:12.5px;line-height:16px;color:#0f0f0f;-webkit-text-stroke:0.15px #0f0f0f">3</div>
<div class="a" style="left:965.3px;top:859px;width:30px;text-align:center;font-weight:bold;font-size:12.5px;line-height:16px;color:#0f0f0f;-webkit-text-stroke:0.15px #0f0f0f">4</div>
<div class="a" style="left:994.7px;top:859px;width:30px;text-align:center;font-weight:bold;font-size:12.5px;line-height:16px;color:#0f0f0f;-webkit-text-stroke:0.15px #0f0f0f">5</div>
<div class="a" style="left:1024.0px;top:859px;width:30px;text-align:center;font-weight:bold;font-size:12.5px;line-height:16px;color:#0f0f0f;-webkit-text-stroke:0.15px #0f0f0f">6</div>
<div class="a" style="left:1053.0px;top:859px;width:30px;text-align:center;font-weight:bold;font-size:12.5px;line-height:16px;color:#0f0f0f;-webkit-text-stroke:0.15px #0f0f0f">7</div>
<div class="a" style="left:1082.0px;top:859px;width:30px;text-align:center;font-weight:bold;font-size:12.5px;line-height:16px;color:#0f0f0f;-webkit-text-stroke:0.15px #0f0f0f">8</div>
<div class="a" style="left:1111.0px;top:859px;width:30px;text-align:center;font-weight:bold;font-size:12.5px;line-height:16px;color:#0f0f0f;-webkit-text-stroke:0.15px #0f0f0f">9</div>
<div class="a" style="left:1143.5px;top:859px;width:30px;text-align:center;font-weight:bold;font-size:12.5px;line-height:16px;color:#0f0f0f;-webkit-text-stroke:0.15px #0f0f0f">10</div>
<div class="a" style="left:1179.5px;top:859px;width:30px;text-align:center;font-weight:bold;font-size:12.5px;line-height:16px;color:#0f0f0f;-webkit-text-stroke:0.15px #0f0f0f">11</div>
<div class="a" style="left:1213.5px;top:859px;font-weight:bold;font-size:12.5px;line-height:16px;color:#0f0f0f;-webkit-text-stroke:0.15px #0f0f0f">Next</div>
<svg class="a" style="left:1252px;top:860px" width="8" height="13" viewBox="0 0 8 13"><path d="M1.5 1 L6.5 6.5 L1.5 12" fill="none" stroke="#333" stroke-width="1.2"/></svg>
<div class="a" style="left:1280.5px;top:859px;font-weight:bold;font-size:12.5px;line-height:16px;color:#0f0f0f;-webkit-text-stroke:0.15px #0f0f0f;letter-spacing:0.3px">100 per page</div>
<svg class="a" style="left:1365.5px;top:864px" width="7" height="5" viewBox="0 0 7 5"><path d="M0.6 0.3 H6.4 L3.5 3.8 Z" fill="#222"/></svg>

</div></body></html>
